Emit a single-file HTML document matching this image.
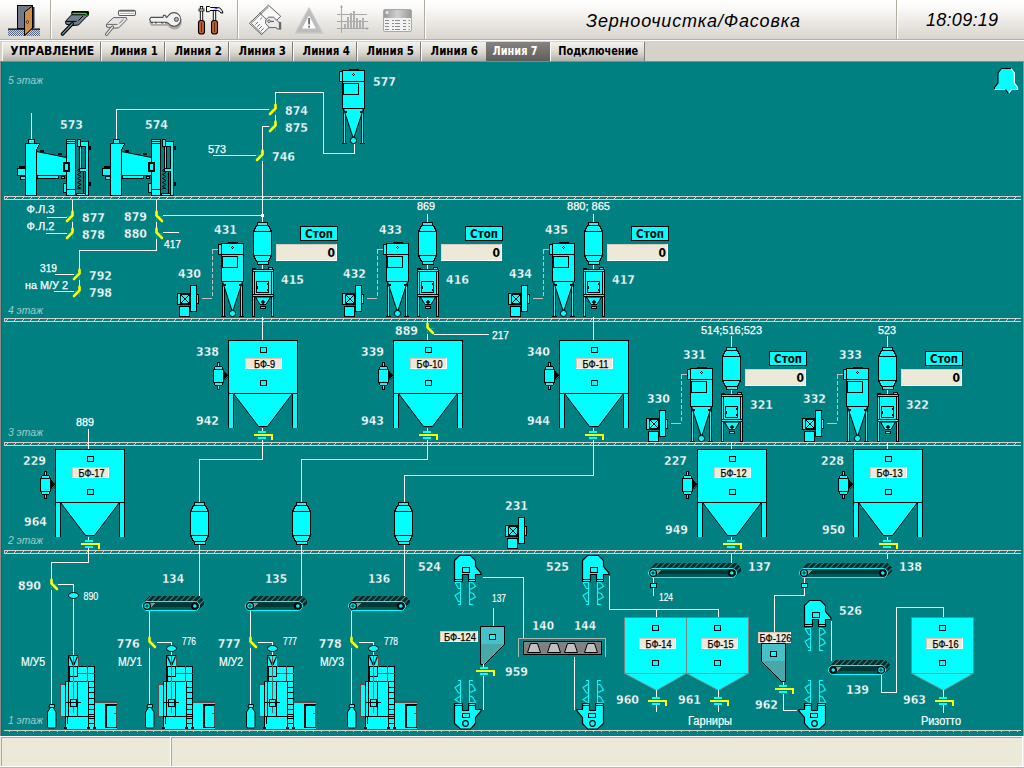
<!DOCTYPE html>
<html lang="ru"><head><meta charset="utf-8"><title>Зерноочистка/Фасовка</title>
<style>
html,body{margin:0;padding:0;background:#008080;overflow:hidden}
body{width:1024px;height:768px;position:relative;font-family:"Liberation Sans","DejaVu Sans",sans-serif}
svg{position:absolute;left:0;top:0;display:block}
text{font-family:"Liberation Sans","DejaVu Sans",sans-serif;fill:#fff;color:#fff;white-space:pre}
.b{font-family:"DejaVu Sans Condensed","DejaVu Sans","Liberation Sans",sans-serif;font-weight:bold;font-size:12px}
.bt{stroke:#008080;stroke-width:.3px}
.l{font-size:11px;stroke:currentColor;stroke-width:.25px}
.l2{font-size:12px;stroke:#fff;stroke-width:.2px}
.s{font-size:10px;stroke:#fff;stroke-width:.15px}
.fl{font-size:11.5px;font-style:italic;fill:#a3cac7}
.tb{font-family:"DejaVu Sans Condensed","DejaVu Sans","Liberation Sans",sans-serif;font-weight:bold;font-size:11.5px}
.ti{font-size:18px;font-style:italic;fill:#000}
</style></head>
<body>
<svg width="1024" height="768" viewBox="0 0 1024 768" shape-rendering="crispEdges">
<defs>
<linearGradient id="tbar" x1="0" y1="0" x2="0" y2="1"><stop offset="0" stop-color="#ffffff"/><stop offset=".25" stop-color="#f9f8f6"/><stop offset="1" stop-color="#d8d4cd"/></linearGradient>
<linearGradient id="tab" x1="0" y1="0" x2="0" y2="1"><stop offset="0" stop-color="#f3f2ec"/><stop offset=".5" stop-color="#dcd9d2"/><stop offset="1" stop-color="#afaba4"/></linearGradient>
<linearGradient id="tsel" x1="0" y1="0" x2="0" y2="1"><stop offset="0" stop-color="#858380"/><stop offset="1" stop-color="#5e5c57"/></linearGradient>
<linearGradient id="tbg" x1="0" y1="0" x2="1" y2="0"><stop offset="0" stop-color="#9a9a9a"/><stop offset=".5" stop-color="#d0d0d0"/><stop offset="1" stop-color="#9a9a9a"/></linearGradient>
<pattern id="fh" x="0" y="1" width="8" height="2" patternUnits="userSpaceOnUse"><rect x="7" y="0" width="1" height="1" fill="#d6cfcb"/><rect x="6" y="1" width="1" height="1" fill="#d6cfcb"/></pattern>
<pattern id="hatch" width="4" height="4" patternUnits="userSpaceOnUse" patternTransform="rotate(45)"><rect width="4" height="4" fill="#0a2a2a"/><rect width="1.3" height="4" fill="#2a8a8a"/></pattern>
<pattern id="dots" width="2" height="2" patternUnits="userSpaceOnUse"><rect width="1" height="1" fill="#e2dcd8"/><rect x="1" y="1" width="1" height="1" fill="#e2dcd8"/></pattern>
<pattern id="stip" width="2" height="2" patternUnits="userSpaceOnUse"><rect width="2" height="2" fill="#d0d0d0"/><rect width="1" height="1" fill="#5a6a8a"/><rect x="1" y="1" width="1" height="1" fill="#5a6a8a"/></pattern>
</defs>
<rect x="0" y="0" width="1024" height="768" fill="#008080"/>
<!-- toolbar -->
<rect x="0" y="0" width="1024" height="39" fill="url(#tbar)"/>
<rect x="0" y="39" width="1024" height="1" fill="#b4b0a6"/>
<rect x="0" y="40" width="1024" height="1" fill="#ffffff"/>
<rect x="0" y="41" width="1024" height="21" fill="#d6d2ca"/>
<g fill="#b0aca2"><rect x="50" y="0" width="1" height="39"/><rect x="237" y="0" width="1" height="39"/><rect x="424" y="0" width="1" height="39"/><rect x="896" y="0" width="1" height="39"/></g>
<g fill="#ffffff"><rect x="51" y="0" width="1" height="39"/><rect x="238" y="0" width="1" height="39"/><rect x="425" y="0" width="1" height="39"/><rect x="897" y="0" width="1" height="39"/></g>
<g shape-rendering="auto">
<rect x="8" y="29" width="32" height="7" fill="url(#stip)"/>
<rect x="8" y="28.5" width="32" height="1.2" fill="#000"/>
<rect x="17.5" y="5.5" width="15" height="23" fill="#707a8c" stroke="#000" stroke-width="1"/>
<polygon points="24.5,12 32.5,6 32.5,28 24.5,35.5" fill="#d08c48" stroke="#000" stroke-width="1"/>
<rect x="33" y="7" width="1.5" height="21" fill="#1c2c50"/>
<ellipse cx="27.5" cy="22" rx="1" ry="1.6" fill="#9cd" stroke="#000" stroke-width=".6"/>
<polygon points="72,11 88.5,11 89.2,13 88.7,15.5 87,16.8 85.5,14.6 71.2,14.6 71.2,12.5" fill="#000"/>
<polygon points="71.5,14.8 86.3,14.8 87,16.2 78.5,25 73,25.5 66,24.2 65.5,21.3" fill="#708090" stroke="#000" stroke-width="1" stroke-linejoin="round"/>
<path d="M72.5,13.3H85.5L87.4,15.6" fill="none" stroke="#00f000" stroke-width="1.3"/>
<path d="M66,21.4H76.6M78.4,20.6L83,16" stroke="#000" stroke-width="1" fill="none"/>
<path d="M72.3,23.8L62.5,34" stroke="#000" stroke-width="3.6" fill="none" stroke-linecap="round"/>
<path d="M72.3,23.8L62.5,34" stroke="#708090" stroke-width="1.4" fill="none" stroke-linecap="round"/>
<rect x="118.5" y="10.3" width="17" height="5.2" rx="1.6" fill="#fdfdfd" stroke="#5c5c5c" stroke-width="1.1"/>
<rect x="119.5" y="10.2" width="15" height="1.4" fill="#5c5c5c"/>
<path d="M120.5,13.4h13" stroke="#606060" stroke-width="1" stroke-dasharray="1,1"/>
<polygon points="113.5,17.6 126.4,17.6 126.8,19.6 118.8,27.8 114,28.2 106.6,27 106.4,24.2" fill="#e6e6e6" stroke="#606060" stroke-width="1" stroke-linejoin="round"/>
<path d="M107,24.4H117.5M119.3,23.3L123.5,19.3" stroke="#686868" stroke-width="1" fill="none"/>
<path d="M112.5,27L106.6,34.3" stroke="#606060" stroke-width="3.2" fill="none" stroke-linecap="round"/>
<path d="M112.5,27L106.6,34.3" stroke="#f2f2f2" stroke-width="1.2" fill="none" stroke-linecap="round"/>
<path d="M149.6,19.6L150.8,17.4H163L163.4,15.4H165.2L166.6,17.6L168.4,15.6A6.8,6.8 0 1 1 168.4,23.2L166.8,22.4H151.2Z" fill="#a9a9a9" stroke="#a9a9a9" stroke-width="1.2" transform="translate(0.3,2.8)"/>
<path d="M149.6,19.6L150.8,17.4H163L163.4,15.4H165.2L166.6,17.6L168.4,15.6A6.8,6.8 0 1 1 168.4,23.2L166.8,22.4H151.2Z" fill="#f1f1f1" stroke="#505050" stroke-width="1.1" stroke-linejoin="round"/>
<circle cx="176.4" cy="19.4" r="2" fill="#b4b4b4" stroke="#484848" stroke-width="1"/>
<path d="M153,23.4h2M157,23.4h4M163.5,23.4h1.5" stroke="#f1f1f1" stroke-width="1.2"/>
<rect x="200.3" y="6.5" width="2.4" height="14" fill="#f4f4f4" stroke="#000" stroke-width=".9"/>
<rect x="199" y="9" width="5" height="2" fill="#fff" stroke="#000" stroke-width=".8"/>
<rect x="198.5" y="20.5" width="6" height="13.5" rx="2.6" fill="#bf5f2f" stroke="#000" stroke-width="1.1"/>
<path d="M201.5,22.5v9.5" stroke="#5a2a10" stroke-width=".9"/>
<rect x="213.3" y="9" width="2.4" height="12" fill="#f4f4f4" stroke="#000" stroke-width=".9"/>
<path d="M206.5,6.5h3l1,1h7q4,0 5.5,5.5h-2.2q-1,-2.5 -3.3,-2.5h-7.5l-.8,1.2h-2.7z" fill="#f8f8f8" stroke="#000" stroke-width="1"/>
<path d="M213.5,9.3l3,-1.6h2.5l-3,1.6z" fill="#2030ff"/>
<rect x="211.5" y="20.5" width="6" height="13.5" rx="2.6" fill="#bf5f2f" stroke="#000" stroke-width="1.1"/>
<path d="M214.5,22.5v9.5" stroke="#5a2a10" stroke-width=".9"/>
<polygon points="268.4,5.2 280.8,16.3 261.5,34.6 249.4,23.3" fill="#f9f9f9" stroke="#5e5e5e" stroke-width="1"/>
<path d="M251.2,23.3L268.5,6.9M251.2,23.3L262.2,33.5" stroke="#707070" stroke-width=".9" fill="none"/>
<path d="M259.4,12.9L268.5,21.5L269.4,27.4" stroke="#5e5e5e" stroke-width="1" fill="none"/>
<path d="M255.4,24.6l2.6,-2.6M257.3,26.7l2.6,-2.6M259.2,28.8l2.6,-2.6M261.1,30.9l2.6,-2.6M260.2,19.4l1.8,-1.8" stroke="#6a6a6a" stroke-width="1" fill="none"/>
<polygon points="265.8,19.8 268.6,17.2 273.6,17.2 278.6,22 279.4,22 279.4,29 277.2,29 276.4,27.6 269.4,27.6 265.6,23.6" fill="#e9e9e9" stroke="#5e5e5e" stroke-width="1" stroke-linejoin="round"/>
<rect x="279.2" y="22" width="2" height="7.7" fill="#686868"/>
<circle cx="269" cy="21.2" r="1.3" fill="#fff" stroke="#505050" stroke-width=".9"/>
<path d="M270.4,21.4H274" stroke="#505050" stroke-width="1"/>
<polygon points="309,8 322.5,33 295.5,33" fill="#bcbcbc" stroke="#c8c8c8" stroke-width="1.4" stroke-linejoin="round"/>
<polygon points="309,15.5 316,28.5 302,28.5" fill="#ffffff"/>
<rect x="308.2" y="18" width="1.8" height="6.5" fill="#6a6a6a"/><rect x="308.2" y="25.8" width="1.8" height="1.8" fill="#6a6a6a"/>
<path d="M341.5,6v27M337,14.5h30M337,21.5h31M337,28.5h31" stroke="#a8a8a8" stroke-width="1" fill="none"/>
<path d="M341.5,5l-1.5,2.5h3zM369,28.5l-2.5,-1.5v3z" fill="#a0a0a0"/>
<rect x="344" y="24" width="2" height="4" fill="#b0b0b0"/>
<rect x="344" y="30" width="2" height="2.5" fill="#d8d8d8"/>
<rect x="347" y="17" width="2" height="11" fill="#b0b0b0"/>
<rect x="347" y="30" width="2" height="2.5" fill="#d8d8d8"/>
<rect x="350" y="13" width="2" height="15" fill="#b0b0b0"/>
<rect x="350" y="30" width="2" height="2.5" fill="#d8d8d8"/>
<rect x="353" y="11" width="2" height="17" fill="#b0b0b0"/>
<rect x="353" y="30" width="2" height="2.5" fill="#d8d8d8"/>
<rect x="356" y="18" width="2" height="10" fill="#b0b0b0"/>
<rect x="356" y="30" width="2" height="2.5" fill="#d8d8d8"/>
<rect x="359" y="20" width="2" height="8" fill="#b0b0b0"/>
<rect x="359" y="30" width="2" height="2.5" fill="#d8d8d8"/>
<rect x="362" y="18" width="2" height="10" fill="#b0b0b0"/>
<rect x="362" y="30" width="2" height="2.5" fill="#d8d8d8"/>
<rect x="383.5" y="9.5" width="28" height="22" rx="1.5" fill="#f2f2f2" stroke="#a8a8a8" stroke-width="1"/>
<rect x="384" y="10" width="27" height="8" fill="url(#tbg)"/>
<circle cx="387" cy="12.5" r="1.6" fill="#e8e8e8"/>
<path d="M385,20.5h4M392,20.5h2M395,20.5h5M403,20.5h3M408.5,20.5h1.5" stroke="#8a8a8a" stroke-width="1"/>
<path d="M385,23.5h4M392,23.5h2M395,23.5h5M403,23.5h3M408.5,23.5h1.5" stroke="#8a8a8a" stroke-width="1"/>
<path d="M385,26.5h4M392,26.5h2M395,26.5h5M403,26.5h3M408.5,26.5h1.5" stroke="#8a8a8a" stroke-width="1"/>
<path d="M385,29.5h4M392,29.5h2M395,29.5h5M403,29.5h3M408.5,29.5h1.5" stroke="#8a8a8a" stroke-width="1"/>
</g>
<text class="ti" x="693" y="26.5" text-anchor="middle" textLength="214" lengthAdjust="spacing" shape-rendering="auto">Зерноочистка/Фасовка</text>
<text class="ti" x="962" y="25.9" text-anchor="middle" textLength="72" lengthAdjust="spacing">18:09:19</text>
<!-- tabs -->
<rect x="2" y="42" width="98" height="20" fill="url(#tab)"/>
<rect x="100" y="42" width="1" height="20" fill="#7c7c7c"/>
<rect x="2" y="42" width="1" height="19" fill="#fbfaf6"/>
<text class="tb" x="10.3" y="55" textLength="84" lengthAdjust="spacingAndGlyphs" style="fill:#000">УПРАВЛЕНИЕ</text>
<rect x="101" y="42" width="63" height="20" fill="url(#tab)"/>
<rect x="164" y="42" width="1" height="20" fill="#7c7c7c"/>
<rect x="101" y="42" width="1" height="19" fill="#fbfaf6"/>
<text class="tb" x="110.4" y="55" textLength="47.4" lengthAdjust="spacingAndGlyphs" style="fill:#000">Линия 1</text>
<rect x="165" y="42" width="63" height="20" fill="url(#tab)"/>
<rect x="228" y="42" width="1" height="20" fill="#7c7c7c"/>
<rect x="165" y="42" width="1" height="19" fill="#fbfaf6"/>
<text class="tb" x="174.5" y="55" textLength="47.4" lengthAdjust="spacingAndGlyphs" style="fill:#000">Линия 2</text>
<rect x="229" y="42" width="63" height="20" fill="url(#tab)"/>
<rect x="292" y="42" width="1" height="20" fill="#7c7c7c"/>
<rect x="229" y="42" width="1" height="19" fill="#fbfaf6"/>
<text class="tb" x="238.6" y="55" textLength="47.4" lengthAdjust="spacingAndGlyphs" style="fill:#000">Линия 3</text>
<rect x="293" y="42" width="63" height="20" fill="url(#tab)"/>
<rect x="356" y="42" width="1" height="20" fill="#7c7c7c"/>
<rect x="293" y="42" width="1" height="19" fill="#fbfaf6"/>
<text class="tb" x="302.6" y="55" textLength="47.4" lengthAdjust="spacingAndGlyphs" style="fill:#000">Линия 4</text>
<rect x="357" y="42" width="63" height="20" fill="url(#tab)"/>
<rect x="420" y="42" width="1" height="20" fill="#7c7c7c"/>
<rect x="357" y="42" width="1" height="19" fill="#fbfaf6"/>
<text class="tb" x="366.6" y="55" textLength="47.4" lengthAdjust="spacingAndGlyphs" style="fill:#000">Линия 5</text>
<rect x="421" y="42" width="65" height="20" fill="url(#tab)"/>
<rect x="421" y="42" width="1" height="19" fill="#fbfaf6"/>
<text class="tb" x="430.6" y="55" textLength="47.4" lengthAdjust="spacingAndGlyphs" style="fill:#000">Линия 6</text>
<rect x="486" y="42" width="64" height="20" fill="url(#tsel)"/>
<text class="tb" x="492.6" y="55" textLength="45" lengthAdjust="spacingAndGlyphs" style="fill:#fff">Линия 7</text>
<rect x="550" y="42" width="94" height="20" fill="url(#tab)"/>
<rect x="644" y="42" width="1" height="20" fill="#7c7c7c"/>
<rect x="550" y="42" width="1" height="19" fill="#fbfaf6"/>
<text class="tb" x="558.2" y="55" textLength="80" lengthAdjust="spacingAndGlyphs" style="fill:#000">Подключение</text>
<!-- frame -->
<rect x="0" y="61" width="1024" height="1" fill="#8e8685"/>
<rect x="0" y="62" width="1" height="674" fill="#8e8a88"/>
<rect x="1" y="62" width="1" height="674" fill="#007070"/>
<rect x="1023" y="62" width="1" height="674" fill="#9a9896"/>
<rect x="1022" y="62" width="1" height="672" fill="#007878"/>
<!-- plant -->
<rect x="4" y="196" width="1017" height="1" fill="#d6cfcb"/>
<rect x="4" y="197" width="1017" height="2" fill="url(#fh)"/>
<rect x="4" y="199" width="1017" height="1" fill="#d6cfcb"/>
<rect x="4" y="196" width="1" height="4" fill="#d6cfcb"/>
<rect x="4" y="318" width="1017" height="1" fill="#d6cfcb"/>
<rect x="4" y="319" width="1017" height="2" fill="url(#fh)"/>
<rect x="4" y="321" width="1017" height="1" fill="#d6cfcb"/>
<rect x="4" y="318" width="1" height="4" fill="#d6cfcb"/>
<rect x="4" y="442" width="1017" height="1" fill="#d6cfcb"/>
<rect x="4" y="443" width="1017" height="2" fill="url(#fh)"/>
<rect x="4" y="445" width="1017" height="1" fill="#d6cfcb"/>
<rect x="4" y="442" width="1" height="4" fill="#d6cfcb"/>
<rect x="4" y="550" width="1017" height="1" fill="#d6cfcb"/>
<rect x="4" y="551" width="1017" height="2" fill="url(#fh)"/>
<rect x="4" y="553" width="1017" height="1" fill="#d6cfcb"/>
<rect x="4" y="550" width="1" height="4" fill="#d6cfcb"/>
<rect x="4" y="730" width="1017" height="1" fill="#d6cfcb"/>
<rect x="9" y="731" width="1" height="1" fill="#d6cfcb"/>
<rect x="17" y="731" width="1" height="1" fill="#d6cfcb"/>
<rect x="25" y="731" width="1" height="1" fill="#d6cfcb"/>
<rect x="33" y="731" width="1" height="1" fill="#d6cfcb"/>
<rect x="41" y="731" width="1" height="1" fill="#d6cfcb"/>
<rect x="49" y="731" width="1" height="1" fill="#d6cfcb"/>
<rect x="57" y="731" width="1" height="1" fill="#d6cfcb"/>
<rect x="65" y="731" width="1" height="1" fill="#d6cfcb"/>
<rect x="73" y="731" width="1" height="1" fill="#d6cfcb"/>
<rect x="81" y="731" width="1" height="1" fill="#d6cfcb"/>
<rect x="89" y="731" width="1" height="1" fill="#d6cfcb"/>
<rect x="97" y="731" width="1" height="1" fill="#d6cfcb"/>
<rect x="105" y="731" width="1" height="1" fill="#d6cfcb"/>
<rect x="113" y="731" width="1" height="1" fill="#d6cfcb"/>
<rect x="121" y="731" width="1" height="1" fill="#d6cfcb"/>
<rect x="129" y="731" width="1" height="1" fill="#d6cfcb"/>
<rect x="137" y="731" width="1" height="1" fill="#d6cfcb"/>
<rect x="145" y="731" width="1" height="1" fill="#d6cfcb"/>
<rect x="153" y="731" width="1" height="1" fill="#d6cfcb"/>
<rect x="161" y="731" width="1" height="1" fill="#d6cfcb"/>
<rect x="169" y="731" width="1" height="1" fill="#d6cfcb"/>
<rect x="177" y="731" width="1" height="1" fill="#d6cfcb"/>
<rect x="185" y="731" width="1" height="1" fill="#d6cfcb"/>
<rect x="193" y="731" width="1" height="1" fill="#d6cfcb"/>
<rect x="201" y="731" width="1" height="1" fill="#d6cfcb"/>
<rect x="209" y="731" width="1" height="1" fill="#d6cfcb"/>
<rect x="217" y="731" width="1" height="1" fill="#d6cfcb"/>
<rect x="225" y="731" width="1" height="1" fill="#d6cfcb"/>
<rect x="233" y="731" width="1" height="1" fill="#d6cfcb"/>
<rect x="241" y="731" width="1" height="1" fill="#d6cfcb"/>
<rect x="249" y="731" width="1" height="1" fill="#d6cfcb"/>
<rect x="257" y="731" width="1" height="1" fill="#d6cfcb"/>
<rect x="265" y="731" width="1" height="1" fill="#d6cfcb"/>
<rect x="273" y="731" width="1" height="1" fill="#d6cfcb"/>
<rect x="281" y="731" width="1" height="1" fill="#d6cfcb"/>
<rect x="289" y="731" width="1" height="1" fill="#d6cfcb"/>
<rect x="297" y="731" width="1" height="1" fill="#d6cfcb"/>
<rect x="305" y="731" width="1" height="1" fill="#d6cfcb"/>
<rect x="313" y="731" width="1" height="1" fill="#d6cfcb"/>
<rect x="321" y="731" width="1" height="1" fill="#d6cfcb"/>
<rect x="329" y="731" width="1" height="1" fill="#d6cfcb"/>
<rect x="337" y="731" width="1" height="1" fill="#d6cfcb"/>
<rect x="345" y="731" width="1" height="1" fill="#d6cfcb"/>
<rect x="353" y="731" width="1" height="1" fill="#d6cfcb"/>
<rect x="361" y="731" width="1" height="1" fill="#d6cfcb"/>
<rect x="369" y="731" width="1" height="1" fill="#d6cfcb"/>
<rect x="377" y="731" width="1" height="1" fill="#d6cfcb"/>
<rect x="385" y="731" width="1" height="1" fill="#d6cfcb"/>
<rect x="393" y="731" width="1" height="1" fill="#d6cfcb"/>
<rect x="401" y="731" width="1" height="1" fill="#d6cfcb"/>
<rect x="409" y="731" width="1" height="1" fill="#d6cfcb"/>
<rect x="417" y="731" width="1" height="1" fill="#d6cfcb"/>
<rect x="425" y="731" width="1" height="1" fill="#d6cfcb"/>
<rect x="433" y="731" width="1" height="1" fill="#d6cfcb"/>
<rect x="441" y="731" width="1" height="1" fill="#d6cfcb"/>
<rect x="449" y="731" width="1" height="1" fill="#d6cfcb"/>
<rect x="457" y="731" width="1" height="1" fill="#d6cfcb"/>
<rect x="465" y="731" width="1" height="1" fill="#d6cfcb"/>
<rect x="473" y="731" width="1" height="1" fill="#d6cfcb"/>
<rect x="481" y="731" width="1" height="1" fill="#d6cfcb"/>
<rect x="489" y="731" width="1" height="1" fill="#d6cfcb"/>
<rect x="497" y="731" width="1" height="1" fill="#d6cfcb"/>
<rect x="505" y="731" width="1" height="1" fill="#d6cfcb"/>
<rect x="513" y="731" width="1" height="1" fill="#d6cfcb"/>
<rect x="521" y="731" width="1" height="1" fill="#d6cfcb"/>
<rect x="529" y="731" width="1" height="1" fill="#d6cfcb"/>
<rect x="537" y="731" width="1" height="1" fill="#d6cfcb"/>
<rect x="545" y="731" width="1" height="1" fill="#d6cfcb"/>
<rect x="553" y="731" width="1" height="1" fill="#d6cfcb"/>
<rect x="561" y="731" width="1" height="1" fill="#d6cfcb"/>
<rect x="569" y="731" width="1" height="1" fill="#d6cfcb"/>
<rect x="577" y="731" width="1" height="1" fill="#d6cfcb"/>
<rect x="585" y="731" width="1" height="1" fill="#d6cfcb"/>
<rect x="593" y="731" width="1" height="1" fill="#d6cfcb"/>
<rect x="601" y="731" width="1" height="1" fill="#d6cfcb"/>
<rect x="609" y="731" width="1" height="1" fill="#d6cfcb"/>
<rect x="617" y="731" width="1" height="1" fill="#d6cfcb"/>
<rect x="625" y="731" width="1" height="1" fill="#d6cfcb"/>
<rect x="633" y="731" width="1" height="1" fill="#d6cfcb"/>
<rect x="641" y="731" width="1" height="1" fill="#d6cfcb"/>
<rect x="649" y="731" width="1" height="1" fill="#d6cfcb"/>
<rect x="657" y="731" width="1" height="1" fill="#d6cfcb"/>
<rect x="665" y="731" width="1" height="1" fill="#d6cfcb"/>
<rect x="673" y="731" width="1" height="1" fill="#d6cfcb"/>
<rect x="681" y="731" width="1" height="1" fill="#d6cfcb"/>
<rect x="689" y="731" width="1" height="1" fill="#d6cfcb"/>
<rect x="697" y="731" width="1" height="1" fill="#d6cfcb"/>
<rect x="705" y="731" width="1" height="1" fill="#d6cfcb"/>
<rect x="713" y="731" width="1" height="1" fill="#d6cfcb"/>
<rect x="721" y="731" width="1" height="1" fill="#d6cfcb"/>
<rect x="729" y="731" width="1" height="1" fill="#d6cfcb"/>
<rect x="737" y="731" width="1" height="1" fill="#d6cfcb"/>
<rect x="745" y="731" width="1" height="1" fill="#d6cfcb"/>
<rect x="753" y="731" width="1" height="1" fill="#d6cfcb"/>
<rect x="761" y="731" width="1" height="1" fill="#d6cfcb"/>
<rect x="769" y="731" width="1" height="1" fill="#d6cfcb"/>
<rect x="777" y="731" width="1" height="1" fill="#d6cfcb"/>
<rect x="785" y="731" width="1" height="1" fill="#d6cfcb"/>
<rect x="793" y="731" width="1" height="1" fill="#d6cfcb"/>
<rect x="801" y="731" width="1" height="1" fill="#d6cfcb"/>
<rect x="809" y="731" width="1" height="1" fill="#d6cfcb"/>
<rect x="817" y="731" width="1" height="1" fill="#d6cfcb"/>
<rect x="825" y="731" width="1" height="1" fill="#d6cfcb"/>
<rect x="833" y="731" width="1" height="1" fill="#d6cfcb"/>
<rect x="841" y="731" width="1" height="1" fill="#d6cfcb"/>
<rect x="849" y="731" width="1" height="1" fill="#d6cfcb"/>
<rect x="857" y="731" width="1" height="1" fill="#d6cfcb"/>
<rect x="865" y="731" width="1" height="1" fill="#d6cfcb"/>
<rect x="873" y="731" width="1" height="1" fill="#d6cfcb"/>
<rect x="881" y="731" width="1" height="1" fill="#d6cfcb"/>
<rect x="889" y="731" width="1" height="1" fill="#d6cfcb"/>
<rect x="897" y="731" width="1" height="1" fill="#d6cfcb"/>
<rect x="905" y="731" width="1" height="1" fill="#d6cfcb"/>
<rect x="913" y="731" width="1" height="1" fill="#d6cfcb"/>
<rect x="921" y="731" width="1" height="1" fill="#d6cfcb"/>
<rect x="929" y="731" width="1" height="1" fill="#d6cfcb"/>
<rect x="937" y="731" width="1" height="1" fill="#d6cfcb"/>
<rect x="945" y="731" width="1" height="1" fill="#d6cfcb"/>
<rect x="953" y="731" width="1" height="1" fill="#d6cfcb"/>
<rect x="961" y="731" width="1" height="1" fill="#d6cfcb"/>
<rect x="969" y="731" width="1" height="1" fill="#d6cfcb"/>
<rect x="977" y="731" width="1" height="1" fill="#d6cfcb"/>
<rect x="985" y="731" width="1" height="1" fill="#d6cfcb"/>
<rect x="993" y="731" width="1" height="1" fill="#d6cfcb"/>
<rect x="1001" y="731" width="1" height="1" fill="#d6cfcb"/>
<rect x="1009" y="731" width="1" height="1" fill="#d6cfcb"/>
<rect x="1017" y="731" width="1" height="1" fill="#d6cfcb"/>
<text class="fl" x="8" y="84" textLength="35" lengthAdjust="spacingAndGlyphs">5 этаж</text>
<text class="fl" x="8" y="314" textLength="35" lengthAdjust="spacingAndGlyphs">4 этаж</text>
<text class="fl" x="8" y="436" textLength="35" lengthAdjust="spacingAndGlyphs">3 этаж</text>
<text class="fl" x="8" y="544" textLength="35" lengthAdjust="spacingAndGlyphs">2 этаж</text>
<text class="fl" x="8" y="724" textLength="35" lengthAdjust="spacingAndGlyphs">1 этаж</text>
<rect x="76.5" y="193.5" width="12" height="2" fill="#00ffff" stroke="#000000" stroke-width="1"/>
<rect x="85.5" y="141.5" width="3" height="54" fill="#00ffff" stroke="#000000" stroke-width="1"/>
<rect x="80.5" y="141.5" width="8" height="5" fill="#00ffff" stroke="#000000" stroke-width="1"/>
<rect x="86" y="146" width="2" height="2" fill="#00ffff"/>
<rect x="77.5" y="139.5" width="3" height="7" fill="#00ffff" stroke="#000000" stroke-width="1"/>
<rect x="79.5" y="146.5" width="2" height="22" fill="#00ffff" stroke="#000000" stroke-width="1"/>
<rect x="79.5" y="168.5" width="6" height="3" fill="#00ffff" stroke="#000000" stroke-width="1"/>
<rect x="85" y="169" width="1" height="2" fill="#00ffff"/>
<rect x="83" y="172" width="1" height="22" fill="#000000"/>
<polyline points="79,169 77.5,170.5 81,172.5 77.5,174.5 81,176.5 77.5,178.5 81,180.5 77.5,182.5 81,184.5 77.5,186.5 81,188.5 77.5,188.5" fill="none" stroke="#000000" stroke-width="1" shape-rendering="auto"/>
<rect x="89" y="146" width="2" height="4" fill="#000000"/>
<rect x="89" y="182" width="2" height="4" fill="#000000"/>
<polygon points="36.5,151.5 66.5,157.5 66.5,175.5 36.5,175.5" fill="#00ffff" stroke="#000000" stroke-width="1" shape-rendering="auto"/>
<rect x="40" y="150" width="4" height="2" fill="#000000"/>
<rect x="58" y="153" width="4" height="2" fill="#000000"/>
<rect x="37.5" y="175.5" width="21" height="3" fill="#00ffff" stroke="#000000" stroke-width="1"/>
<rect x="61.5" y="176.5" width="3" height="2" fill="#00ffff" stroke="#000000" stroke-width="1"/>
<rect x="19" y="166" width="6" height="3" fill="#000000"/>
<rect x="17.5" y="168.5" width="8" height="7" fill="#00ffff" stroke="#000000" stroke-width="1"/>
<rect x="20.5" y="176.5" width="5" height="3" fill="#00ffff" stroke="#000000" stroke-width="1"/>
<rect x="28.5" y="139.5" width="6" height="4" fill="#00ffff" stroke="#000000" stroke-width="1"/>
<polygon points="25.5,143.5 39.5,143.5 36.5,150.5 36.5,195.5 25.5,195.5" fill="#00ffff" stroke="#000000" stroke-width="1" />
<rect x="66.5" y="139.5" width="9" height="56" fill="#00ffff" stroke="#000000" stroke-width="1"/>
<rect x="67" y="141" width="8" height="1" fill="#000000"/>
<rect x="67" y="143" width="8" height="1" fill="#000000"/>
<rect x="66" y="189" width="10" height="1" fill="#000000"/>
<rect x="63.8" y="162.8" width="5.4" height="8.4" fill="#00ffff" stroke="#000000" stroke-width="1.6"/>
<rect x="63.6" y="183.6" width="2.8" height="8.8" fill="#00ffff" stroke="#000000" stroke-width="1.2"/>
<rect x="161.5" y="193.5" width="12" height="2" fill="#00ffff" stroke="#000000" stroke-width="1"/>
<rect x="170.5" y="141.5" width="3" height="54" fill="#00ffff" stroke="#000000" stroke-width="1"/>
<rect x="165.5" y="141.5" width="8" height="5" fill="#00ffff" stroke="#000000" stroke-width="1"/>
<rect x="171" y="146" width="2" height="2" fill="#00ffff"/>
<rect x="162.5" y="139.5" width="3" height="7" fill="#00ffff" stroke="#000000" stroke-width="1"/>
<rect x="164.5" y="146.5" width="2" height="22" fill="#00ffff" stroke="#000000" stroke-width="1"/>
<rect x="164.5" y="168.5" width="6" height="3" fill="#00ffff" stroke="#000000" stroke-width="1"/>
<rect x="170" y="169" width="1" height="2" fill="#00ffff"/>
<rect x="168" y="172" width="1" height="22" fill="#000000"/>
<polyline points="164,169 162.5,170.5 166,172.5 162.5,174.5 166,176.5 162.5,178.5 166,180.5 162.5,182.5 166,184.5 162.5,186.5 166,188.5 162.5,188.5" fill="none" stroke="#000000" stroke-width="1" shape-rendering="auto"/>
<rect x="174" y="146" width="2" height="4" fill="#000000"/>
<rect x="174" y="182" width="2" height="4" fill="#000000"/>
<polygon points="121.5,151.5 151.5,157.5 151.5,175.5 121.5,175.5" fill="#00ffff" stroke="#000000" stroke-width="1" shape-rendering="auto"/>
<rect x="125" y="150" width="4" height="2" fill="#000000"/>
<rect x="143" y="153" width="4" height="2" fill="#000000"/>
<rect x="122.5" y="175.5" width="21" height="3" fill="#00ffff" stroke="#000000" stroke-width="1"/>
<rect x="146.5" y="176.5" width="3" height="2" fill="#00ffff" stroke="#000000" stroke-width="1"/>
<rect x="104" y="166" width="6" height="3" fill="#000000"/>
<rect x="102.5" y="168.5" width="8" height="7" fill="#00ffff" stroke="#000000" stroke-width="1"/>
<rect x="105.5" y="176.5" width="5" height="3" fill="#00ffff" stroke="#000000" stroke-width="1"/>
<rect x="113.5" y="139.5" width="6" height="4" fill="#00ffff" stroke="#000000" stroke-width="1"/>
<polygon points="110.5,143.5 124.5,143.5 121.5,150.5 121.5,195.5 110.5,195.5" fill="#00ffff" stroke="#000000" stroke-width="1" />
<rect x="151.5" y="139.5" width="9" height="56" fill="#00ffff" stroke="#000000" stroke-width="1"/>
<rect x="152" y="141" width="8" height="1" fill="#000000"/>
<rect x="152" y="143" width="8" height="1" fill="#000000"/>
<rect x="151" y="189" width="10" height="1" fill="#000000"/>
<rect x="148.8" y="162.8" width="5.4" height="8.4" fill="#00ffff" stroke="#000000" stroke-width="1.6"/>
<rect x="148.6" y="183.6" width="2.8" height="8.8" fill="#00ffff" stroke="#000000" stroke-width="1.2"/>
<rect x="31" y="113" width="1" height="26" fill="#ffffff"/>
<rect x="116" y="109" width="1" height="30" fill="#ffffff"/>
<rect x="116" y="109" width="153" height="1" fill="#ffffff"/>
<rect x="275" y="92" width="1" height="12" fill="#ffffff"/>
<rect x="275" y="92" width="49" height="1" fill="#ffffff"/>
<rect x="323" y="92" width="1" height="62" fill="#ffffff"/>
<rect x="323" y="153" width="32" height="1" fill="#ffffff"/>
<rect x="354" y="144" width="1" height="10" fill="#ffffff"/>
<rect x="275" y="115" width="1" height="6" fill="#ffffff"/>
<rect x="262" y="126" width="8" height="1" fill="#ffffff"/>
<rect x="262" y="126" width="1" height="24" fill="#ffffff"/>
<rect x="213" y="155" width="43" height="1" fill="#ffffff"/>
<rect x="275" y="109" width="1" height="6" fill="#00a0a0"/>
<rect x="269" y="109" width="6" height="1" fill="#00a0a0"/>
<path d="M275.5,104.8V108.5L270,114" stroke="#ffff00" stroke-width="2.6" fill="none" stroke-linecap="round" shape-rendering="auto"/>
<rect x="275" y="126" width="1" height="6" fill="#00a0a0"/>
<rect x="269" y="126" width="6" height="1" fill="#00a0a0"/>
<path d="M275.5,121.8V125.5L270,131" stroke="#ffff00" stroke-width="2.6" fill="none" stroke-linecap="round" shape-rendering="auto"/>
<rect x="262" y="155" width="1" height="6" fill="#00a0a0"/>
<rect x="256" y="155" width="6" height="1" fill="#00a0a0"/>
<path d="M262.5,150.8V154.5L257,160" stroke="#ffff00" stroke-width="2.6" fill="none" stroke-linecap="round" shape-rendering="auto"/>
<text class="b bt" x="60" y="129" textLength="23" lengthAdjust="spacingAndGlyphs">573</text>
<text class="b bt" x="145" y="129" textLength="23" lengthAdjust="spacingAndGlyphs">574</text>
<text class="b bt" x="285" y="115" textLength="23" lengthAdjust="spacingAndGlyphs">874</text>
<text class="b bt" x="285" y="132" textLength="23" lengthAdjust="spacingAndGlyphs">875</text>
<text class="b bt" x="272" y="161" textLength="23" lengthAdjust="spacingAndGlyphs">746</text>
<text class="l" x="208" y="153" textLength="18" lengthAdjust="spacingAndGlyphs">573</text>
<rect x="349.5" y="69.5" width="9" height="1" fill="#00ffff" stroke="#000000" stroke-width="1"/>
<rect x="339.5" y="71.5" width="3" height="10" fill="#00ffff" stroke="#000000" stroke-width="1"/>
<rect x="342.5" y="70.5" width="22" height="38" fill="#00ffff" stroke="#000000" stroke-width="1"/>
<rect x="342" y="81" width="23" height="1" fill="#000000"/>
<rect x="353" y="73" width="1" height="1" fill="#000000"/>
<rect x="352" y="74" width="1" height="1" fill="#000000"/>
<rect x="354" y="74" width="1" height="1" fill="#000000"/>
<rect x="353" y="75" width="1" height="1" fill="#000000"/>
<rect x="343.5" y="83.5" width="15" height="11" fill="#00ffff" stroke="#000000" stroke-width="1"/>
<rect x="343.5" y="108.5" width="2" height="35" fill="#00ffff" stroke="#000000" stroke-width="1"/>
<rect x="361.5" y="108.5" width="2" height="35" fill="#00ffff" stroke="#000000" stroke-width="1"/>
<rect x="342" y="143" width="5" height="1" fill="#000000"/>
<rect x="360" y="143" width="5" height="1" fill="#000000"/>
<polygon points="343.5,108.5 363.5,108.5 354.2,137 352.8,137" fill="#00ffff" stroke="#000000" stroke-width="1" shape-rendering="auto"/>
<rect x="345" y="111" width="2" height="2" fill="#000000"/>
<rect x="360" y="111" width="2" height="2" fill="#000000"/>
<circle cx="353.5" cy="140.5" r="3.1" fill="#00ffff" stroke="#000" stroke-width="1" shape-rendering="auto"/>
<text class="b bt" x="373" y="86" textLength="23" lengthAdjust="spacingAndGlyphs">577</text>
<rect x="72" y="200" width="1" height="11" fill="#ffffff"/>
<rect x="156" y="200" width="1" height="11" fill="#ffffff"/>
<rect x="262" y="161" width="1" height="61" fill="#ffffff"/>
<rect x="72" y="216" width="1" height="6" fill="#00a0a0"/>
<rect x="66" y="216" width="6" height="1" fill="#00a0a0"/>
<path d="M72.5,211.8V215.5L67,221" stroke="#ffff00" stroke-width="2.6" fill="none" stroke-linecap="round" shape-rendering="auto"/>
<rect x="72" y="233" width="1" height="6" fill="#00a0a0"/>
<rect x="66" y="233" width="6" height="1" fill="#00a0a0"/>
<path d="M72.5,228.8V232.5L67,238" stroke="#ffff00" stroke-width="2.6" fill="none" stroke-linecap="round" shape-rendering="auto"/>
<rect x="72" y="222" width="1" height="6" fill="#ffffff"/>
<rect x="47" y="217" width="20" height="1" fill="#ffffff"/>
<rect x="46" y="233" width="21" height="1" fill="#ffffff"/>
<text class="l" x="26.4" y="213" textLength="28" lengthAdjust="spacingAndGlyphs">Ф.Л.3</text>
<text class="l" x="26.4" y="230" textLength="28" lengthAdjust="spacingAndGlyphs">Ф.Л.2</text>
<text class="b bt" x="82" y="222" textLength="23" lengthAdjust="spacingAndGlyphs">877</text>
<text class="b bt" x="82" y="239" textLength="23" lengthAdjust="spacingAndGlyphs">878</text>
<text class="b bt" x="124" y="221" textLength="23" lengthAdjust="spacingAndGlyphs">879</text>
<text class="b bt" x="124" y="238" textLength="23" lengthAdjust="spacingAndGlyphs">880</text>
<rect x="156" y="216" width="1" height="6" fill="#00a0a0"/>
<rect x="157" y="216" width="6" height="1" fill="#00a0a0"/>
<path d="M156.5,211.8V215.5L162,221" stroke="#ffff00" stroke-width="2.6" fill="none" stroke-linecap="round" shape-rendering="auto"/>
<rect x="156" y="233" width="1" height="6" fill="#00a0a0"/>
<rect x="157" y="233" width="6" height="1" fill="#00a0a0"/>
<path d="M156.5,228.8V232.5L162,238" stroke="#ffff00" stroke-width="2.6" fill="none" stroke-linecap="round" shape-rendering="auto"/>
<rect x="156" y="222" width="1" height="6" fill="#ffffff"/>
<rect x="163" y="215" width="100" height="1" fill="#ffffff"/>
<rect x="163" y="232" width="16" height="1" fill="#ffffff"/>
<circle cx="262.5" cy="215.5" r="1.5" fill="#fff"/>
<text class="l" x="164" y="248" textLength="17" lengthAdjust="spacingAndGlyphs">417</text>
<rect x="156" y="239" width="1" height="12" fill="#ffffff"/>
<rect x="79" y="250" width="78" height="1" fill="#ffffff"/>
<rect x="79" y="250" width="1" height="19" fill="#ffffff"/>
<rect x="79" y="274" width="1" height="6" fill="#00a0a0"/>
<rect x="73" y="274" width="6" height="1" fill="#00a0a0"/>
<path d="M79.5,269.8V273.5L74,279" stroke="#ffff00" stroke-width="2.6" fill="none" stroke-linecap="round" shape-rendering="auto"/>
<rect x="79" y="291" width="1" height="6" fill="#00a0a0"/>
<rect x="73" y="291" width="6" height="1" fill="#00a0a0"/>
<path d="M79.5,286.8V290.5L74,296" stroke="#ffff00" stroke-width="2.6" fill="none" stroke-linecap="round" shape-rendering="auto"/>
<rect x="79" y="280" width="1" height="6" fill="#ffffff"/>
<rect x="55" y="274" width="19" height="1" fill="#ffffff"/>
<rect x="54" y="291" width="20" height="1" fill="#ffffff"/>
<text class="l" x="40" y="272" textLength="17" lengthAdjust="spacingAndGlyphs">319</text>
<text class="l" x="25" y="289" textLength="43" lengthAdjust="spacingAndGlyphs">на М/У 2</text>
<text class="b bt" x="89" y="280" textLength="23" lengthAdjust="spacingAndGlyphs">792</text>
<text class="b bt" x="89" y="297" textLength="23" lengthAdjust="spacingAndGlyphs">798</text>
<rect x="190.5" y="285.5" width="6" height="26" fill="#00ffff" stroke="#000000" stroke-width="1"/>
<rect x="196.5" y="294.5" width="2" height="9" fill="#00ffff" stroke="#000000" stroke-width="1"/>
<rect x="177.5" y="293.5" width="13" height="11" fill="#00ffff" stroke="#000000" stroke-width="1"/>
<rect x="180.5" y="294.5" width="9" height="9" fill="#00ffff" stroke="#000000" stroke-width="1"/>
<path d="M180.5,294.5L189.5,303.5M189.5,294.5L180.5,303.5" stroke="#000" stroke-width="1" fill="none"/>
<rect x="179.5" y="306.5" width="10" height="10" fill="#00ffff" stroke="#000000" stroke-width="1"/>
<rect x="202" y="298" width="10" height="1" fill="#c0c0c0"/>
<rect x="212" y="250" width="1" height="4" fill="#c0c0c0"/>
<rect x="212" y="256" width="1" height="4" fill="#c0c0c0"/>
<rect x="212" y="262" width="1" height="4" fill="#c0c0c0"/>
<rect x="212" y="268" width="1" height="4" fill="#c0c0c0"/>
<rect x="212" y="274" width="1" height="4" fill="#c0c0c0"/>
<rect x="212" y="280" width="1" height="4" fill="#c0c0c0"/>
<rect x="212" y="286" width="1" height="4" fill="#c0c0c0"/>
<rect x="212" y="292" width="1" height="4" fill="#c0c0c0"/>
<rect x="212" y="249" width="7" height="1" fill="#c0c0c0"/>
<rect x="228.5" y="242.5" width="9" height="1" fill="#00ffff" stroke="#000000" stroke-width="1"/>
<rect x="218.5" y="244.5" width="3" height="10" fill="#00ffff" stroke="#000000" stroke-width="1"/>
<rect x="221.5" y="243.5" width="22" height="38" fill="#00ffff" stroke="#000000" stroke-width="1"/>
<rect x="221" y="254" width="23" height="1" fill="#000000"/>
<rect x="232" y="246" width="1" height="1" fill="#000000"/>
<rect x="231" y="247" width="1" height="1" fill="#000000"/>
<rect x="233" y="247" width="1" height="1" fill="#000000"/>
<rect x="232" y="248" width="1" height="1" fill="#000000"/>
<rect x="222.5" y="256.5" width="15" height="11" fill="#00ffff" stroke="#000000" stroke-width="1"/>
<rect x="222.5" y="281.5" width="2" height="35" fill="#00ffff" stroke="#000000" stroke-width="1"/>
<rect x="240.5" y="281.5" width="2" height="35" fill="#00ffff" stroke="#000000" stroke-width="1"/>
<rect x="221" y="316" width="5" height="1" fill="#000000"/>
<rect x="239" y="316" width="5" height="1" fill="#000000"/>
<polygon points="222.5,281.5 242.5,281.5 233.2,310 231.8,310" fill="#00ffff" stroke="#000000" stroke-width="1" shape-rendering="auto"/>
<rect x="224" y="284" width="2" height="2" fill="#000000"/>
<rect x="239" y="284" width="2" height="2" fill="#000000"/>
<circle cx="232.5" cy="313.5" r="3.1" fill="#00ffff" stroke="#000" stroke-width="1" shape-rendering="auto"/>
<rect x="262" y="264" width="1" height="5" fill="#ffffff"/>
<rect x="257.5" y="222.5" width="10" height="3" fill="#00ffff" stroke="#000000" stroke-width="1"/>
<polygon points="256.5,225.5 268.5,225.5 271.5,231.5 271.5,255.5 268.5,261.5 256.5,261.5 253.5,255.5 253.5,231.5" fill="#00ffff" stroke="#000000" stroke-width="1" />
<rect x="254" y="231" width="18" height="1" fill="#000000"/>
<rect x="254" y="255" width="18" height="1" fill="#000000"/>
<rect x="257.5" y="261.5" width="11" height="3" fill="#00ffff" stroke="#000000" stroke-width="1"/>
<rect x="252" y="268" width="4" height="2" fill="#000000"/>
<rect x="268.5" y="267.5" width="4" height="2" fill="#00ffff" stroke="#000000" stroke-width="1"/>
<rect x="252.5" y="269.5" width="21" height="2" fill="#00ffff" stroke="#000000" stroke-width="1"/>
<rect x="252.5" y="271.5" width="2" height="45" fill="#00ffff" stroke="#000000" stroke-width="1"/>
<rect x="271.5" y="271.5" width="2" height="45" fill="#00ffff" stroke="#000000" stroke-width="1"/>
<rect x="254.5" y="271.5" width="17" height="23" fill="#00ffff" stroke="#000000" stroke-width="1"/>
<rect x="252.5" y="294.5" width="21" height="2" fill="#00ffff" stroke="#000000" stroke-width="1"/>
<rect x="256.7" y="281.7" width="11.6" height="10.6" fill="#00ffff" stroke="#000000" stroke-width="1.4"/>
<rect x="257" y="286" width="1" height="3" fill="#000000"/>
<rect x="267" y="283" width="1" height="2" fill="#000000"/>
<rect x="267" y="289" width="1" height="2" fill="#000000"/>
<polygon points="255.5,297 270.5,297 266,304.5 260,304.5" fill="#00ffff" stroke="#000000" stroke-width="1" shape-rendering="auto"/>
<polygon points="263,300 265,302 263,304 261,302" fill="#000000" stroke="#000000" stroke-width="0.5" shape-rendering="auto"/>
<rect x="260.5" y="306.5" width="5" height="2" fill="#00ffff" stroke="#000000" stroke-width="1"/>
<text class="b bt" x="214" y="234" textLength="23" lengthAdjust="spacingAndGlyphs">431</text>
<text class="b bt" x="178" y="278" textLength="23" lengthAdjust="spacingAndGlyphs">430</text>
<text class="b bt" x="281" y="284" textLength="23" lengthAdjust="spacingAndGlyphs">415</text>
<rect x="300.5" y="226.5" width="37" height="14" fill="#00ffff" stroke="#000000" stroke-width="1"/>
<text class="b" x="319" y="238" textLength="28" lengthAdjust="spacingAndGlyphs" text-anchor="middle" style="fill:#000;color:#000">Стоп</text>
<rect x="276" y="244" width="61" height="17" fill="#ece9d8"/>
<rect x="276" y="244" width="61" height="1" fill="#d9c9bb"/>
<rect x="276" y="244" width="1" height="17" fill="#e0d6c8"/>
<rect x="276" y="260" width="61" height="1" fill="#ffffff"/>
<rect x="336" y="244" width="1" height="17" fill="#ffffff"/>
<text class="b" x="335" y="257" text-anchor="end" style="fill:#000;color:#000">0</text>
<rect x="355.5" y="285.5" width="6" height="26" fill="#00ffff" stroke="#000000" stroke-width="1"/>
<rect x="361.5" y="294.5" width="2" height="9" fill="#00ffff" stroke="#000000" stroke-width="1"/>
<rect x="342.5" y="293.5" width="13" height="11" fill="#00ffff" stroke="#000000" stroke-width="1"/>
<rect x="345.5" y="294.5" width="9" height="9" fill="#00ffff" stroke="#000000" stroke-width="1"/>
<path d="M345.5,294.5L354.5,303.5M354.5,294.5L345.5,303.5" stroke="#000" stroke-width="1" fill="none"/>
<rect x="344.5" y="306.5" width="10" height="10" fill="#00ffff" stroke="#000000" stroke-width="1"/>
<rect x="367" y="298" width="10" height="1" fill="#c0c0c0"/>
<rect x="377" y="250" width="1" height="4" fill="#c0c0c0"/>
<rect x="377" y="256" width="1" height="4" fill="#c0c0c0"/>
<rect x="377" y="262" width="1" height="4" fill="#c0c0c0"/>
<rect x="377" y="268" width="1" height="4" fill="#c0c0c0"/>
<rect x="377" y="274" width="1" height="4" fill="#c0c0c0"/>
<rect x="377" y="280" width="1" height="4" fill="#c0c0c0"/>
<rect x="377" y="286" width="1" height="4" fill="#c0c0c0"/>
<rect x="377" y="292" width="1" height="4" fill="#c0c0c0"/>
<rect x="377" y="249" width="7" height="1" fill="#c0c0c0"/>
<rect x="393.5" y="242.5" width="9" height="1" fill="#00ffff" stroke="#000000" stroke-width="1"/>
<rect x="383.5" y="244.5" width="3" height="10" fill="#00ffff" stroke="#000000" stroke-width="1"/>
<rect x="386.5" y="243.5" width="22" height="38" fill="#00ffff" stroke="#000000" stroke-width="1"/>
<rect x="386" y="254" width="23" height="1" fill="#000000"/>
<rect x="397" y="246" width="1" height="1" fill="#000000"/>
<rect x="396" y="247" width="1" height="1" fill="#000000"/>
<rect x="398" y="247" width="1" height="1" fill="#000000"/>
<rect x="397" y="248" width="1" height="1" fill="#000000"/>
<rect x="387.5" y="256.5" width="15" height="11" fill="#00ffff" stroke="#000000" stroke-width="1"/>
<rect x="387.5" y="281.5" width="2" height="35" fill="#00ffff" stroke="#000000" stroke-width="1"/>
<rect x="405.5" y="281.5" width="2" height="35" fill="#00ffff" stroke="#000000" stroke-width="1"/>
<rect x="386" y="316" width="5" height="1" fill="#000000"/>
<rect x="404" y="316" width="5" height="1" fill="#000000"/>
<polygon points="387.5,281.5 407.5,281.5 398.2,310 396.8,310" fill="#00ffff" stroke="#000000" stroke-width="1" shape-rendering="auto"/>
<rect x="389" y="284" width="2" height="2" fill="#000000"/>
<rect x="404" y="284" width="2" height="2" fill="#000000"/>
<circle cx="397.5" cy="313.5" r="3.1" fill="#00ffff" stroke="#000" stroke-width="1" shape-rendering="auto"/>
<rect x="427" y="264" width="1" height="5" fill="#ffffff"/>
<rect x="422.5" y="222.5" width="10" height="3" fill="#00ffff" stroke="#000000" stroke-width="1"/>
<polygon points="421.5,225.5 433.5,225.5 436.5,231.5 436.5,255.5 433.5,261.5 421.5,261.5 418.5,255.5 418.5,231.5" fill="#00ffff" stroke="#000000" stroke-width="1" />
<rect x="419" y="231" width="18" height="1" fill="#000000"/>
<rect x="419" y="255" width="18" height="1" fill="#000000"/>
<rect x="422.5" y="261.5" width="11" height="3" fill="#00ffff" stroke="#000000" stroke-width="1"/>
<rect x="417" y="268" width="4" height="2" fill="#000000"/>
<rect x="433.5" y="267.5" width="4" height="2" fill="#00ffff" stroke="#000000" stroke-width="1"/>
<rect x="417.5" y="269.5" width="21" height="2" fill="#00ffff" stroke="#000000" stroke-width="1"/>
<rect x="417.5" y="271.5" width="2" height="45" fill="#00ffff" stroke="#000000" stroke-width="1"/>
<rect x="436.5" y="271.5" width="2" height="45" fill="#00ffff" stroke="#000000" stroke-width="1"/>
<rect x="419.5" y="271.5" width="17" height="23" fill="#00ffff" stroke="#000000" stroke-width="1"/>
<rect x="417.5" y="294.5" width="21" height="2" fill="#00ffff" stroke="#000000" stroke-width="1"/>
<rect x="421.7" y="281.7" width="11.6" height="10.6" fill="#00ffff" stroke="#000000" stroke-width="1.4"/>
<rect x="422" y="286" width="1" height="3" fill="#000000"/>
<rect x="432" y="283" width="1" height="2" fill="#000000"/>
<rect x="432" y="289" width="1" height="2" fill="#000000"/>
<polygon points="420.5,297 435.5,297 431,304.5 425,304.5" fill="#00ffff" stroke="#000000" stroke-width="1" shape-rendering="auto"/>
<polygon points="428,300 430,302 428,304 426,302" fill="#000000" stroke="#000000" stroke-width="0.5" shape-rendering="auto"/>
<rect x="425.5" y="306.5" width="5" height="2" fill="#00ffff" stroke="#000000" stroke-width="1"/>
<text class="b bt" x="379" y="234" textLength="23" lengthAdjust="spacingAndGlyphs">433</text>
<text class="b bt" x="343" y="278" textLength="23" lengthAdjust="spacingAndGlyphs">432</text>
<text class="b bt" x="446" y="284" textLength="23" lengthAdjust="spacingAndGlyphs">416</text>
<rect x="465.5" y="226.5" width="37" height="14" fill="#00ffff" stroke="#000000" stroke-width="1"/>
<text class="b" x="484" y="238" textLength="28" lengthAdjust="spacingAndGlyphs" text-anchor="middle" style="fill:#000;color:#000">Стоп</text>
<rect x="441" y="244" width="61" height="17" fill="#ece9d8"/>
<rect x="441" y="244" width="61" height="1" fill="#d9c9bb"/>
<rect x="441" y="244" width="1" height="17" fill="#e0d6c8"/>
<rect x="441" y="260" width="61" height="1" fill="#ffffff"/>
<rect x="501" y="244" width="1" height="17" fill="#ffffff"/>
<text class="b" x="500" y="257" text-anchor="end" style="fill:#000;color:#000">0</text>
<rect x="521.5" y="285.5" width="6" height="26" fill="#00ffff" stroke="#000000" stroke-width="1"/>
<rect x="527.5" y="294.5" width="2" height="9" fill="#00ffff" stroke="#000000" stroke-width="1"/>
<rect x="508.5" y="293.5" width="13" height="11" fill="#00ffff" stroke="#000000" stroke-width="1"/>
<rect x="511.5" y="294.5" width="9" height="9" fill="#00ffff" stroke="#000000" stroke-width="1"/>
<path d="M511.5,294.5L520.5,303.5M520.5,294.5L511.5,303.5" stroke="#000" stroke-width="1" fill="none"/>
<rect x="510.5" y="306.5" width="10" height="10" fill="#00ffff" stroke="#000000" stroke-width="1"/>
<rect x="533" y="298" width="10" height="1" fill="#c0c0c0"/>
<rect x="543" y="250" width="1" height="4" fill="#c0c0c0"/>
<rect x="543" y="256" width="1" height="4" fill="#c0c0c0"/>
<rect x="543" y="262" width="1" height="4" fill="#c0c0c0"/>
<rect x="543" y="268" width="1" height="4" fill="#c0c0c0"/>
<rect x="543" y="274" width="1" height="4" fill="#c0c0c0"/>
<rect x="543" y="280" width="1" height="4" fill="#c0c0c0"/>
<rect x="543" y="286" width="1" height="4" fill="#c0c0c0"/>
<rect x="543" y="292" width="1" height="4" fill="#c0c0c0"/>
<rect x="543" y="249" width="7" height="1" fill="#c0c0c0"/>
<rect x="559.5" y="242.5" width="9" height="1" fill="#00ffff" stroke="#000000" stroke-width="1"/>
<rect x="549.5" y="244.5" width="3" height="10" fill="#00ffff" stroke="#000000" stroke-width="1"/>
<rect x="552.5" y="243.5" width="22" height="38" fill="#00ffff" stroke="#000000" stroke-width="1"/>
<rect x="552" y="254" width="23" height="1" fill="#000000"/>
<rect x="563" y="246" width="1" height="1" fill="#000000"/>
<rect x="562" y="247" width="1" height="1" fill="#000000"/>
<rect x="564" y="247" width="1" height="1" fill="#000000"/>
<rect x="563" y="248" width="1" height="1" fill="#000000"/>
<rect x="553.5" y="256.5" width="15" height="11" fill="#00ffff" stroke="#000000" stroke-width="1"/>
<rect x="553.5" y="281.5" width="2" height="35" fill="#00ffff" stroke="#000000" stroke-width="1"/>
<rect x="571.5" y="281.5" width="2" height="35" fill="#00ffff" stroke="#000000" stroke-width="1"/>
<rect x="552" y="316" width="5" height="1" fill="#000000"/>
<rect x="570" y="316" width="5" height="1" fill="#000000"/>
<polygon points="553.5,281.5 573.5,281.5 564.2,310 562.8,310" fill="#00ffff" stroke="#000000" stroke-width="1" shape-rendering="auto"/>
<rect x="555" y="284" width="2" height="2" fill="#000000"/>
<rect x="570" y="284" width="2" height="2" fill="#000000"/>
<circle cx="563.5" cy="313.5" r="3.1" fill="#00ffff" stroke="#000" stroke-width="1" shape-rendering="auto"/>
<rect x="593" y="264" width="1" height="5" fill="#ffffff"/>
<rect x="588.5" y="222.5" width="10" height="3" fill="#00ffff" stroke="#000000" stroke-width="1"/>
<polygon points="587.5,225.5 599.5,225.5 602.5,231.5 602.5,255.5 599.5,261.5 587.5,261.5 584.5,255.5 584.5,231.5" fill="#00ffff" stroke="#000000" stroke-width="1" />
<rect x="585" y="231" width="18" height="1" fill="#000000"/>
<rect x="585" y="255" width="18" height="1" fill="#000000"/>
<rect x="588.5" y="261.5" width="11" height="3" fill="#00ffff" stroke="#000000" stroke-width="1"/>
<rect x="583" y="268" width="4" height="2" fill="#000000"/>
<rect x="599.5" y="267.5" width="4" height="2" fill="#00ffff" stroke="#000000" stroke-width="1"/>
<rect x="583.5" y="269.5" width="21" height="2" fill="#00ffff" stroke="#000000" stroke-width="1"/>
<rect x="583.5" y="271.5" width="2" height="45" fill="#00ffff" stroke="#000000" stroke-width="1"/>
<rect x="602.5" y="271.5" width="2" height="45" fill="#00ffff" stroke="#000000" stroke-width="1"/>
<rect x="585.5" y="271.5" width="17" height="23" fill="#00ffff" stroke="#000000" stroke-width="1"/>
<rect x="583.5" y="294.5" width="21" height="2" fill="#00ffff" stroke="#000000" stroke-width="1"/>
<rect x="587.7" y="281.7" width="11.6" height="10.6" fill="#00ffff" stroke="#000000" stroke-width="1.4"/>
<rect x="588" y="286" width="1" height="3" fill="#000000"/>
<rect x="598" y="283" width="1" height="2" fill="#000000"/>
<rect x="598" y="289" width="1" height="2" fill="#000000"/>
<polygon points="586.5,297 601.5,297 597,304.5 591,304.5" fill="#00ffff" stroke="#000000" stroke-width="1" shape-rendering="auto"/>
<polygon points="594,300 596,302 594,304 592,302" fill="#000000" stroke="#000000" stroke-width="0.5" shape-rendering="auto"/>
<rect x="591.5" y="306.5" width="5" height="2" fill="#00ffff" stroke="#000000" stroke-width="1"/>
<text class="b bt" x="545" y="234" textLength="23" lengthAdjust="spacingAndGlyphs">435</text>
<text class="b bt" x="509" y="278" textLength="23" lengthAdjust="spacingAndGlyphs">434</text>
<text class="b bt" x="612" y="284" textLength="23" lengthAdjust="spacingAndGlyphs">417</text>
<rect x="631.5" y="226.5" width="37" height="14" fill="#00ffff" stroke="#000000" stroke-width="1"/>
<text class="b" x="650" y="238" textLength="28" lengthAdjust="spacingAndGlyphs" text-anchor="middle" style="fill:#000;color:#000">Стоп</text>
<rect x="607" y="244" width="61" height="17" fill="#ece9d8"/>
<rect x="607" y="244" width="61" height="1" fill="#d9c9bb"/>
<rect x="607" y="244" width="1" height="17" fill="#e0d6c8"/>
<rect x="607" y="260" width="61" height="1" fill="#ffffff"/>
<rect x="667" y="244" width="1" height="17" fill="#ffffff"/>
<text class="b" x="666" y="257" text-anchor="end" style="fill:#000;color:#000">0</text>
<text class="l" x="417" y="210" textLength="18" lengthAdjust="spacingAndGlyphs">869</text>
<rect x="427" y="214" width="1" height="8" fill="#ffffff"/>
<text class="l" x="567" y="210" textLength="43" lengthAdjust="spacingAndGlyphs">880; 865</text>
<rect x="593" y="214" width="1" height="8" fill="#ffffff"/>
<rect x="228.5" y="340.5" width="69" height="53" fill="#00ffff" stroke="#000000" stroke-width="1"/>
<rect x="228.5" y="393.5" width="5" height="35" fill="#00ffff" stroke="#000000" stroke-width="1"/>
<rect x="292.5" y="393.5" width="5" height="35" fill="#00ffff" stroke="#000000" stroke-width="1"/>
<rect x="228" y="428" width="70" height="1" fill="#008080"/>
<polygon points="233.5,393.5 292.5,393.5 267.5,426.5 258.5,426.5" fill="#00ffff" stroke="#000000" stroke-width="1" shape-rendering="auto"/>
<rect x="260.5" y="347.5" width="6" height="5" fill="#00ffff" stroke="#000000" stroke-width="1"/>
<rect x="260.5" y="380.5" width="6" height="5" fill="#00ffff" stroke="#000000" stroke-width="1"/>
<rect x="245" y="358" width="37" height="11" fill="#ece9d8"/>
<rect x="245" y="358" width="37" height="1" fill="#d9c6b8"/>
<rect x="245" y="358" width="1" height="11" fill="#d9c6b8"/>
<rect x="245" y="368" width="37" height="1" fill="#ffffff"/>
<rect x="281" y="358" width="1" height="11" fill="#ffffff"/>
<text class="l" x="264.5" y="368" textLength="21" lengthAdjust="spacingAndGlyphs" text-anchor="middle" style="fill:#000;color:#000">БФ-9</text>
<rect x="217.5" y="362.5" width="2" height="4" fill="#00ffff" stroke="#000000" stroke-width="1"/>
<rect x="217.5" y="385.5" width="2" height="4" fill="#00ffff" stroke="#000000" stroke-width="1"/>
<polygon points="213.5,369.5 215.5,366.5 221.5,366.5 223.5,369.5 223.5,382.5 221.5,385.5 215.5,385.5 213.5,382.5" fill="#00ffff" stroke="#000000" stroke-width="1" />
<rect x="214" y="369" width="10" height="1" fill="#000000"/>
<rect x="214" y="382" width="10" height="1" fill="#000000"/>
<polygon points="224,371 228,375.5 224,380" fill="#000000" stroke="#000000" stroke-width="0.5" />
<text class="b bt" x="196" y="356" textLength="23" lengthAdjust="spacingAndGlyphs">338</text>
<text class="b bt" x="196" y="425" textLength="23" lengthAdjust="spacingAndGlyphs">942</text>
<rect x="262" y="428" width="1" height="3" fill="#ffffff"/>
<rect x="258" y="431" width="8" height="2" fill="#00ffff"/>
<rect x="258" y="437" width="8" height="2" fill="#00ffff"/>
<rect x="254" y="434" width="19" height="2" fill="#ffff00"/>
<rect x="271" y="434" width="2" height="6" fill="#ffff00"/>
<rect x="393.5" y="340.5" width="69" height="53" fill="#00ffff" stroke="#000000" stroke-width="1"/>
<rect x="393.5" y="393.5" width="5" height="35" fill="#00ffff" stroke="#000000" stroke-width="1"/>
<rect x="457.5" y="393.5" width="5" height="35" fill="#00ffff" stroke="#000000" stroke-width="1"/>
<rect x="393" y="428" width="70" height="1" fill="#008080"/>
<polygon points="398.5,393.5 457.5,393.5 432.5,426.5 423.5,426.5" fill="#00ffff" stroke="#000000" stroke-width="1" shape-rendering="auto"/>
<rect x="425.5" y="347.5" width="6" height="5" fill="#00ffff" stroke="#000000" stroke-width="1"/>
<rect x="425.5" y="380.5" width="6" height="5" fill="#00ffff" stroke="#000000" stroke-width="1"/>
<rect x="410" y="358" width="37" height="11" fill="#ece9d8"/>
<rect x="410" y="358" width="37" height="1" fill="#d9c6b8"/>
<rect x="410" y="358" width="1" height="11" fill="#d9c6b8"/>
<rect x="410" y="368" width="37" height="1" fill="#ffffff"/>
<rect x="446" y="358" width="1" height="11" fill="#ffffff"/>
<text class="l" x="429.5" y="368" textLength="26" lengthAdjust="spacingAndGlyphs" text-anchor="middle" style="fill:#000;color:#000">БФ-10</text>
<rect x="382.5" y="362.5" width="2" height="4" fill="#00ffff" stroke="#000000" stroke-width="1"/>
<rect x="382.5" y="385.5" width="2" height="4" fill="#00ffff" stroke="#000000" stroke-width="1"/>
<polygon points="378.5,369.5 380.5,366.5 386.5,366.5 388.5,369.5 388.5,382.5 386.5,385.5 380.5,385.5 378.5,382.5" fill="#00ffff" stroke="#000000" stroke-width="1" />
<rect x="379" y="369" width="10" height="1" fill="#000000"/>
<rect x="379" y="382" width="10" height="1" fill="#000000"/>
<polygon points="389,371 393,375.5 389,380" fill="#000000" stroke="#000000" stroke-width="0.5" />
<text class="b bt" x="361" y="356" textLength="23" lengthAdjust="spacingAndGlyphs">339</text>
<text class="b bt" x="361" y="425" textLength="23" lengthAdjust="spacingAndGlyphs">943</text>
<rect x="427" y="428" width="1" height="3" fill="#ffffff"/>
<rect x="423" y="431" width="8" height="2" fill="#00ffff"/>
<rect x="423" y="437" width="8" height="2" fill="#00ffff"/>
<rect x="419" y="434" width="19" height="2" fill="#ffff00"/>
<rect x="436" y="434" width="2" height="6" fill="#ffff00"/>
<rect x="559.5" y="340.5" width="69" height="53" fill="#00ffff" stroke="#000000" stroke-width="1"/>
<rect x="559.5" y="393.5" width="5" height="35" fill="#00ffff" stroke="#000000" stroke-width="1"/>
<rect x="623.5" y="393.5" width="5" height="35" fill="#00ffff" stroke="#000000" stroke-width="1"/>
<rect x="559" y="428" width="70" height="1" fill="#008080"/>
<polygon points="564.5,393.5 623.5,393.5 598.5,426.5 589.5,426.5" fill="#00ffff" stroke="#000000" stroke-width="1" shape-rendering="auto"/>
<rect x="591.5" y="347.5" width="6" height="5" fill="#00ffff" stroke="#000000" stroke-width="1"/>
<rect x="591.5" y="380.5" width="6" height="5" fill="#00ffff" stroke="#000000" stroke-width="1"/>
<rect x="576" y="358" width="37" height="11" fill="#ece9d8"/>
<rect x="576" y="358" width="37" height="1" fill="#d9c6b8"/>
<rect x="576" y="358" width="1" height="11" fill="#d9c6b8"/>
<rect x="576" y="368" width="37" height="1" fill="#ffffff"/>
<rect x="612" y="358" width="1" height="11" fill="#ffffff"/>
<text class="l" x="595.5" y="368" textLength="26" lengthAdjust="spacingAndGlyphs" text-anchor="middle" style="fill:#000;color:#000">БФ-11</text>
<rect x="548.5" y="362.5" width="2" height="4" fill="#00ffff" stroke="#000000" stroke-width="1"/>
<rect x="548.5" y="385.5" width="2" height="4" fill="#00ffff" stroke="#000000" stroke-width="1"/>
<polygon points="544.5,369.5 546.5,366.5 552.5,366.5 554.5,369.5 554.5,382.5 552.5,385.5 546.5,385.5 544.5,382.5" fill="#00ffff" stroke="#000000" stroke-width="1" />
<rect x="545" y="369" width="10" height="1" fill="#000000"/>
<rect x="545" y="382" width="10" height="1" fill="#000000"/>
<polygon points="555,371 559,375.5 555,380" fill="#000000" stroke="#000000" stroke-width="0.5" />
<text class="b bt" x="527" y="356" textLength="23" lengthAdjust="spacingAndGlyphs">340</text>
<text class="b bt" x="527" y="425" textLength="23" lengthAdjust="spacingAndGlyphs">944</text>
<rect x="593" y="428" width="1" height="3" fill="#ffffff"/>
<rect x="589" y="431" width="8" height="2" fill="#00ffff"/>
<rect x="589" y="437" width="8" height="2" fill="#00ffff"/>
<rect x="585" y="434" width="19" height="2" fill="#ffff00"/>
<rect x="602" y="434" width="2" height="6" fill="#ffff00"/>
<rect x="262" y="317" width="1" height="23" fill="#ffffff"/>
<rect x="427" y="317" width="1" height="23" fill="#ffffff"/>
<rect x="593" y="317" width="1" height="23" fill="#ffffff"/>
<rect x="427" y="328" width="1" height="6" fill="#00a0a0"/>
<rect x="428" y="328" width="6" height="1" fill="#00a0a0"/>
<path d="M427.5,323.8V327.5L433,333" stroke="#ffff00" stroke-width="2.6" fill="none" stroke-linecap="round" shape-rendering="auto"/>
<rect x="434" y="334" width="55" height="1" fill="#ffffff"/>
<text class="l" x="492" y="339" textLength="17" lengthAdjust="spacingAndGlyphs">217</text>
<text class="b bt" x="395" y="335" textLength="23" lengthAdjust="spacingAndGlyphs">889</text>
<rect x="659.5" y="410.5" width="6" height="26" fill="#00ffff" stroke="#000000" stroke-width="1"/>
<rect x="665.5" y="419.5" width="2" height="9" fill="#00ffff" stroke="#000000" stroke-width="1"/>
<rect x="646.5" y="418.5" width="13" height="11" fill="#00ffff" stroke="#000000" stroke-width="1"/>
<rect x="649.5" y="419.5" width="9" height="9" fill="#00ffff" stroke="#000000" stroke-width="1"/>
<path d="M649.5,419.5L658.5,428.5M658.5,419.5L649.5,428.5" stroke="#000" stroke-width="1" fill="none"/>
<rect x="648.5" y="431.5" width="10" height="10" fill="#00ffff" stroke="#000000" stroke-width="1"/>
<rect x="671" y="423" width="10" height="1" fill="#c0c0c0"/>
<rect x="681" y="375" width="1" height="4" fill="#c0c0c0"/>
<rect x="681" y="381" width="1" height="4" fill="#c0c0c0"/>
<rect x="681" y="387" width="1" height="4" fill="#c0c0c0"/>
<rect x="681" y="393" width="1" height="4" fill="#c0c0c0"/>
<rect x="681" y="399" width="1" height="4" fill="#c0c0c0"/>
<rect x="681" y="405" width="1" height="4" fill="#c0c0c0"/>
<rect x="681" y="411" width="1" height="4" fill="#c0c0c0"/>
<rect x="681" y="417" width="1" height="4" fill="#c0c0c0"/>
<rect x="681" y="374" width="7" height="1" fill="#c0c0c0"/>
<rect x="697.5" y="367.5" width="9" height="1" fill="#00ffff" stroke="#000000" stroke-width="1"/>
<rect x="687.5" y="369.5" width="3" height="10" fill="#00ffff" stroke="#000000" stroke-width="1"/>
<rect x="690.5" y="368.5" width="22" height="38" fill="#00ffff" stroke="#000000" stroke-width="1"/>
<rect x="690" y="379" width="23" height="1" fill="#000000"/>
<rect x="701" y="371" width="1" height="1" fill="#000000"/>
<rect x="700" y="372" width="1" height="1" fill="#000000"/>
<rect x="702" y="372" width="1" height="1" fill="#000000"/>
<rect x="701" y="373" width="1" height="1" fill="#000000"/>
<rect x="691.5" y="381.5" width="15" height="11" fill="#00ffff" stroke="#000000" stroke-width="1"/>
<rect x="691.5" y="406.5" width="2" height="35" fill="#00ffff" stroke="#000000" stroke-width="1"/>
<rect x="709.5" y="406.5" width="2" height="35" fill="#00ffff" stroke="#000000" stroke-width="1"/>
<rect x="690" y="441" width="5" height="1" fill="#000000"/>
<rect x="708" y="441" width="5" height="1" fill="#000000"/>
<polygon points="691.5,406.5 711.5,406.5 702.2,435 700.8,435" fill="#00ffff" stroke="#000000" stroke-width="1" shape-rendering="auto"/>
<rect x="693" y="409" width="2" height="2" fill="#000000"/>
<rect x="708" y="409" width="2" height="2" fill="#000000"/>
<circle cx="701.5" cy="438.5" r="3.1" fill="#00ffff" stroke="#000" stroke-width="1" shape-rendering="auto"/>
<rect x="731" y="389" width="1" height="5" fill="#ffffff"/>
<rect x="726.5" y="347.5" width="10" height="3" fill="#00ffff" stroke="#000000" stroke-width="1"/>
<polygon points="725.5,350.5 737.5,350.5 740.5,356.5 740.5,380.5 737.5,386.5 725.5,386.5 722.5,380.5 722.5,356.5" fill="#00ffff" stroke="#000000" stroke-width="1" />
<rect x="723" y="356" width="18" height="1" fill="#000000"/>
<rect x="723" y="380" width="18" height="1" fill="#000000"/>
<rect x="726.5" y="386.5" width="11" height="3" fill="#00ffff" stroke="#000000" stroke-width="1"/>
<rect x="721" y="393" width="4" height="2" fill="#000000"/>
<rect x="737.5" y="392.5" width="4" height="2" fill="#00ffff" stroke="#000000" stroke-width="1"/>
<rect x="721.5" y="394.5" width="21" height="2" fill="#00ffff" stroke="#000000" stroke-width="1"/>
<rect x="721.5" y="396.5" width="2" height="45" fill="#00ffff" stroke="#000000" stroke-width="1"/>
<rect x="740.5" y="396.5" width="2" height="45" fill="#00ffff" stroke="#000000" stroke-width="1"/>
<rect x="723.5" y="396.5" width="17" height="23" fill="#00ffff" stroke="#000000" stroke-width="1"/>
<rect x="721.5" y="419.5" width="21" height="2" fill="#00ffff" stroke="#000000" stroke-width="1"/>
<rect x="725.7" y="406.7" width="11.6" height="10.6" fill="#00ffff" stroke="#000000" stroke-width="1.4"/>
<rect x="726" y="411" width="1" height="3" fill="#000000"/>
<rect x="736" y="408" width="1" height="2" fill="#000000"/>
<rect x="736" y="414" width="1" height="2" fill="#000000"/>
<polygon points="724.5,422 739.5,422 735,429.5 729,429.5" fill="#00ffff" stroke="#000000" stroke-width="1" shape-rendering="auto"/>
<polygon points="732,425 734,427 732,429 730,427" fill="#000000" stroke="#000000" stroke-width="0.5" shape-rendering="auto"/>
<rect x="729.5" y="431.5" width="5" height="2" fill="#00ffff" stroke="#000000" stroke-width="1"/>
<text class="b bt" x="683" y="359" textLength="23" lengthAdjust="spacingAndGlyphs">331</text>
<text class="b bt" x="647" y="403" textLength="23" lengthAdjust="spacingAndGlyphs">330</text>
<text class="b bt" x="750" y="409" textLength="23" lengthAdjust="spacingAndGlyphs">321</text>
<rect x="769.5" y="351.5" width="37" height="14" fill="#00ffff" stroke="#000000" stroke-width="1"/>
<text class="b" x="788" y="363" textLength="28" lengthAdjust="spacingAndGlyphs" text-anchor="middle" style="fill:#000;color:#000">Стоп</text>
<rect x="745" y="369" width="61" height="17" fill="#ece9d8"/>
<rect x="745" y="369" width="61" height="1" fill="#d9c9bb"/>
<rect x="745" y="369" width="1" height="17" fill="#e0d6c8"/>
<rect x="745" y="385" width="61" height="1" fill="#ffffff"/>
<rect x="805" y="369" width="1" height="17" fill="#ffffff"/>
<text class="b" x="804" y="382" text-anchor="end" style="fill:#000;color:#000">0</text>
<rect x="815.5" y="410.5" width="6" height="26" fill="#00ffff" stroke="#000000" stroke-width="1"/>
<rect x="821.5" y="419.5" width="2" height="9" fill="#00ffff" stroke="#000000" stroke-width="1"/>
<rect x="802.5" y="418.5" width="13" height="11" fill="#00ffff" stroke="#000000" stroke-width="1"/>
<rect x="805.5" y="419.5" width="9" height="9" fill="#00ffff" stroke="#000000" stroke-width="1"/>
<path d="M805.5,419.5L814.5,428.5M814.5,419.5L805.5,428.5" stroke="#000" stroke-width="1" fill="none"/>
<rect x="804.5" y="431.5" width="10" height="10" fill="#00ffff" stroke="#000000" stroke-width="1"/>
<rect x="827" y="423" width="10" height="1" fill="#c0c0c0"/>
<rect x="837" y="375" width="1" height="4" fill="#c0c0c0"/>
<rect x="837" y="381" width="1" height="4" fill="#c0c0c0"/>
<rect x="837" y="387" width="1" height="4" fill="#c0c0c0"/>
<rect x="837" y="393" width="1" height="4" fill="#c0c0c0"/>
<rect x="837" y="399" width="1" height="4" fill="#c0c0c0"/>
<rect x="837" y="405" width="1" height="4" fill="#c0c0c0"/>
<rect x="837" y="411" width="1" height="4" fill="#c0c0c0"/>
<rect x="837" y="417" width="1" height="4" fill="#c0c0c0"/>
<rect x="837" y="374" width="7" height="1" fill="#c0c0c0"/>
<rect x="853.5" y="367.5" width="9" height="1" fill="#00ffff" stroke="#000000" stroke-width="1"/>
<rect x="843.5" y="369.5" width="3" height="10" fill="#00ffff" stroke="#000000" stroke-width="1"/>
<rect x="846.5" y="368.5" width="22" height="38" fill="#00ffff" stroke="#000000" stroke-width="1"/>
<rect x="846" y="379" width="23" height="1" fill="#000000"/>
<rect x="857" y="371" width="1" height="1" fill="#000000"/>
<rect x="856" y="372" width="1" height="1" fill="#000000"/>
<rect x="858" y="372" width="1" height="1" fill="#000000"/>
<rect x="857" y="373" width="1" height="1" fill="#000000"/>
<rect x="847.5" y="381.5" width="15" height="11" fill="#00ffff" stroke="#000000" stroke-width="1"/>
<rect x="847.5" y="406.5" width="2" height="35" fill="#00ffff" stroke="#000000" stroke-width="1"/>
<rect x="865.5" y="406.5" width="2" height="35" fill="#00ffff" stroke="#000000" stroke-width="1"/>
<rect x="846" y="441" width="5" height="1" fill="#000000"/>
<rect x="864" y="441" width="5" height="1" fill="#000000"/>
<polygon points="847.5,406.5 867.5,406.5 858.2,435 856.8,435" fill="#00ffff" stroke="#000000" stroke-width="1" shape-rendering="auto"/>
<rect x="849" y="409" width="2" height="2" fill="#000000"/>
<rect x="864" y="409" width="2" height="2" fill="#000000"/>
<circle cx="857.5" cy="438.5" r="3.1" fill="#00ffff" stroke="#000" stroke-width="1" shape-rendering="auto"/>
<rect x="887" y="389" width="1" height="5" fill="#ffffff"/>
<rect x="882.5" y="347.5" width="10" height="3" fill="#00ffff" stroke="#000000" stroke-width="1"/>
<polygon points="881.5,350.5 893.5,350.5 896.5,356.5 896.5,380.5 893.5,386.5 881.5,386.5 878.5,380.5 878.5,356.5" fill="#00ffff" stroke="#000000" stroke-width="1" />
<rect x="879" y="356" width="18" height="1" fill="#000000"/>
<rect x="879" y="380" width="18" height="1" fill="#000000"/>
<rect x="882.5" y="386.5" width="11" height="3" fill="#00ffff" stroke="#000000" stroke-width="1"/>
<rect x="877" y="393" width="4" height="2" fill="#000000"/>
<rect x="893.5" y="392.5" width="4" height="2" fill="#00ffff" stroke="#000000" stroke-width="1"/>
<rect x="877.5" y="394.5" width="21" height="2" fill="#00ffff" stroke="#000000" stroke-width="1"/>
<rect x="877.5" y="396.5" width="2" height="45" fill="#00ffff" stroke="#000000" stroke-width="1"/>
<rect x="896.5" y="396.5" width="2" height="45" fill="#00ffff" stroke="#000000" stroke-width="1"/>
<rect x="879.5" y="396.5" width="17" height="23" fill="#00ffff" stroke="#000000" stroke-width="1"/>
<rect x="877.5" y="419.5" width="21" height="2" fill="#00ffff" stroke="#000000" stroke-width="1"/>
<rect x="881.7" y="406.7" width="11.6" height="10.6" fill="#00ffff" stroke="#000000" stroke-width="1.4"/>
<rect x="882" y="411" width="1" height="3" fill="#000000"/>
<rect x="892" y="408" width="1" height="2" fill="#000000"/>
<rect x="892" y="414" width="1" height="2" fill="#000000"/>
<polygon points="880.5,422 895.5,422 891,429.5 885,429.5" fill="#00ffff" stroke="#000000" stroke-width="1" shape-rendering="auto"/>
<polygon points="888,425 890,427 888,429 886,427" fill="#000000" stroke="#000000" stroke-width="0.5" shape-rendering="auto"/>
<rect x="885.5" y="431.5" width="5" height="2" fill="#00ffff" stroke="#000000" stroke-width="1"/>
<text class="b bt" x="839" y="359" textLength="23" lengthAdjust="spacingAndGlyphs">333</text>
<text class="b bt" x="803" y="403" textLength="23" lengthAdjust="spacingAndGlyphs">332</text>
<text class="b bt" x="906" y="409" textLength="23" lengthAdjust="spacingAndGlyphs">322</text>
<rect x="925.5" y="351.5" width="37" height="14" fill="#00ffff" stroke="#000000" stroke-width="1"/>
<text class="b" x="944" y="363" textLength="28" lengthAdjust="spacingAndGlyphs" text-anchor="middle" style="fill:#000;color:#000">Стоп</text>
<rect x="901" y="369" width="61" height="17" fill="#ece9d8"/>
<rect x="901" y="369" width="61" height="1" fill="#d9c9bb"/>
<rect x="901" y="369" width="1" height="17" fill="#e0d6c8"/>
<rect x="901" y="385" width="61" height="1" fill="#ffffff"/>
<rect x="961" y="369" width="1" height="17" fill="#ffffff"/>
<text class="b" x="960" y="382" text-anchor="end" style="fill:#000;color:#000">0</text>
<text class="l" x="701" y="334" textLength="61" lengthAdjust="spacingAndGlyphs">514;516;523</text>
<rect x="731" y="336" width="1" height="11" fill="#ffffff"/>
<text class="l" x="878" y="334" textLength="18" lengthAdjust="spacingAndGlyphs">523</text>
<rect x="887" y="336" width="1" height="11" fill="#ffffff"/>
<rect x="55.5" y="449.5" width="69" height="53" fill="#00ffff" stroke="#000000" stroke-width="1"/>
<rect x="55.5" y="502.5" width="5" height="35" fill="#00ffff" stroke="#000000" stroke-width="1"/>
<rect x="119.5" y="502.5" width="5" height="35" fill="#00ffff" stroke="#000000" stroke-width="1"/>
<rect x="55" y="537" width="70" height="1" fill="#008080"/>
<polygon points="60.5,502.5 119.5,502.5 94.5,535.5 85.5,535.5" fill="#00ffff" stroke="#000000" stroke-width="1" shape-rendering="auto"/>
<rect x="87.5" y="456.5" width="6" height="5" fill="#00ffff" stroke="#000000" stroke-width="1"/>
<rect x="87.5" y="489.5" width="6" height="5" fill="#00ffff" stroke="#000000" stroke-width="1"/>
<rect x="72" y="467" width="37" height="11" fill="#ece9d8"/>
<rect x="72" y="467" width="37" height="1" fill="#d9c6b8"/>
<rect x="72" y="467" width="1" height="11" fill="#d9c6b8"/>
<rect x="72" y="477" width="37" height="1" fill="#ffffff"/>
<rect x="108" y="467" width="1" height="11" fill="#ffffff"/>
<text class="l" x="91.5" y="477" textLength="26" lengthAdjust="spacingAndGlyphs" text-anchor="middle" style="fill:#000;color:#000">БФ-17</text>
<rect x="44.5" y="471.5" width="2" height="4" fill="#00ffff" stroke="#000000" stroke-width="1"/>
<rect x="44.5" y="494.5" width="2" height="4" fill="#00ffff" stroke="#000000" stroke-width="1"/>
<polygon points="40.5,478.5 42.5,475.5 48.5,475.5 50.5,478.5 50.5,491.5 48.5,494.5 42.5,494.5 40.5,491.5" fill="#00ffff" stroke="#000000" stroke-width="1" />
<rect x="41" y="478" width="10" height="1" fill="#000000"/>
<rect x="41" y="491" width="10" height="1" fill="#000000"/>
<polygon points="51,480 55,484.5 51,489" fill="#000000" stroke="#000000" stroke-width="0.5" />
<text class="b bt" x="23" y="465" textLength="23" lengthAdjust="spacingAndGlyphs">229</text>
<text class="b bt" x="24" y="526" textLength="23" lengthAdjust="spacingAndGlyphs">964</text>
<text class="l" x="76" y="426.4" textLength="18" lengthAdjust="spacingAndGlyphs">889</text>
<rect x="88" y="429" width="1" height="20" fill="#ffffff"/>
<rect x="88" y="537" width="1" height="3" fill="#ffffff"/>
<rect x="85" y="540" width="8" height="2" fill="#00ffff"/>
<rect x="85" y="546" width="8" height="2" fill="#00ffff"/>
<rect x="81" y="543" width="19" height="2" fill="#ffff00"/>
<rect x="98" y="543" width="2" height="6" fill="#ffff00"/>
<rect x="697.5" y="449.5" width="69" height="53" fill="#00ffff" stroke="#000000" stroke-width="1"/>
<rect x="697.5" y="502.5" width="5" height="35" fill="#00ffff" stroke="#000000" stroke-width="1"/>
<rect x="761.5" y="502.5" width="5" height="35" fill="#00ffff" stroke="#000000" stroke-width="1"/>
<rect x="697" y="537" width="70" height="1" fill="#008080"/>
<polygon points="702.5,502.5 761.5,502.5 736.5,535.5 727.5,535.5" fill="#00ffff" stroke="#000000" stroke-width="1" shape-rendering="auto"/>
<rect x="729.5" y="456.5" width="6" height="5" fill="#00ffff" stroke="#000000" stroke-width="1"/>
<rect x="729.5" y="489.5" width="6" height="5" fill="#00ffff" stroke="#000000" stroke-width="1"/>
<rect x="714" y="467" width="37" height="11" fill="#ece9d8"/>
<rect x="714" y="467" width="37" height="1" fill="#d9c6b8"/>
<rect x="714" y="467" width="1" height="11" fill="#d9c6b8"/>
<rect x="714" y="477" width="37" height="1" fill="#ffffff"/>
<rect x="750" y="467" width="1" height="11" fill="#ffffff"/>
<text class="l" x="733.5" y="477" textLength="26" lengthAdjust="spacingAndGlyphs" text-anchor="middle" style="fill:#000;color:#000">БФ-12</text>
<rect x="686.5" y="471.5" width="2" height="4" fill="#00ffff" stroke="#000000" stroke-width="1"/>
<rect x="686.5" y="494.5" width="2" height="4" fill="#00ffff" stroke="#000000" stroke-width="1"/>
<polygon points="682.5,478.5 684.5,475.5 690.5,475.5 692.5,478.5 692.5,491.5 690.5,494.5 684.5,494.5 682.5,491.5" fill="#00ffff" stroke="#000000" stroke-width="1" />
<rect x="683" y="478" width="10" height="1" fill="#000000"/>
<rect x="683" y="491" width="10" height="1" fill="#000000"/>
<polygon points="693,480 697,484.5 693,489" fill="#000000" stroke="#000000" stroke-width="0.5" />
<text class="b bt" x="664" y="465" textLength="23" lengthAdjust="spacingAndGlyphs">227</text>
<text class="b bt" x="665" y="534" textLength="23" lengthAdjust="spacingAndGlyphs">949</text>
<rect x="853.5" y="449.5" width="69" height="53" fill="#00ffff" stroke="#000000" stroke-width="1"/>
<rect x="853.5" y="502.5" width="5" height="35" fill="#00ffff" stroke="#000000" stroke-width="1"/>
<rect x="917.5" y="502.5" width="5" height="35" fill="#00ffff" stroke="#000000" stroke-width="1"/>
<rect x="853" y="537" width="70" height="1" fill="#008080"/>
<polygon points="858.5,502.5 917.5,502.5 892.5,535.5 883.5,535.5" fill="#00ffff" stroke="#000000" stroke-width="1" shape-rendering="auto"/>
<rect x="885.5" y="456.5" width="6" height="5" fill="#00ffff" stroke="#000000" stroke-width="1"/>
<rect x="885.5" y="489.5" width="6" height="5" fill="#00ffff" stroke="#000000" stroke-width="1"/>
<rect x="870" y="467" width="37" height="11" fill="#ece9d8"/>
<rect x="870" y="467" width="37" height="1" fill="#d9c6b8"/>
<rect x="870" y="467" width="1" height="11" fill="#d9c6b8"/>
<rect x="870" y="477" width="37" height="1" fill="#ffffff"/>
<rect x="906" y="467" width="1" height="11" fill="#ffffff"/>
<text class="l" x="889.5" y="477" textLength="26" lengthAdjust="spacingAndGlyphs" text-anchor="middle" style="fill:#000;color:#000">БФ-13</text>
<rect x="842.5" y="471.5" width="2" height="4" fill="#00ffff" stroke="#000000" stroke-width="1"/>
<rect x="842.5" y="494.5" width="2" height="4" fill="#00ffff" stroke="#000000" stroke-width="1"/>
<polygon points="838.5,478.5 840.5,475.5 846.5,475.5 848.5,478.5 848.5,491.5 846.5,494.5 840.5,494.5 838.5,491.5" fill="#00ffff" stroke="#000000" stroke-width="1" />
<rect x="839" y="478" width="10" height="1" fill="#000000"/>
<rect x="839" y="491" width="10" height="1" fill="#000000"/>
<polygon points="849,480 853,484.5 849,489" fill="#000000" stroke="#000000" stroke-width="0.5" />
<text class="b bt" x="821" y="465" textLength="23" lengthAdjust="spacingAndGlyphs">228</text>
<text class="b bt" x="822" y="534" textLength="23" lengthAdjust="spacingAndGlyphs">950</text>
<rect x="731" y="537" width="1" height="3" fill="#ffffff"/>
<rect x="727" y="540" width="8" height="2" fill="#00ffff"/>
<rect x="727" y="546" width="8" height="2" fill="#00ffff"/>
<rect x="723" y="543" width="19" height="2" fill="#ffff00"/>
<rect x="740" y="543" width="2" height="6" fill="#ffff00"/>
<rect x="887" y="537" width="1" height="3" fill="#ffffff"/>
<rect x="883" y="540" width="8" height="2" fill="#00ffff"/>
<rect x="883" y="546" width="8" height="2" fill="#00ffff"/>
<rect x="879" y="543" width="19" height="2" fill="#ffff00"/>
<rect x="896" y="543" width="2" height="6" fill="#ffff00"/>
<rect x="731" y="442" width="1" height="7" fill="#ffffff"/>
<rect x="887" y="442" width="1" height="7" fill="#ffffff"/>
<rect x="262" y="440" width="1" height="20" fill="#ffffff"/>
<rect x="199" y="459" width="64" height="1" fill="#ffffff"/>
<rect x="199" y="459" width="1" height="43" fill="#ffffff"/>
<rect x="427" y="440" width="1" height="20" fill="#ffffff"/>
<rect x="301" y="459" width="127" height="1" fill="#ffffff"/>
<rect x="301" y="459" width="1" height="43" fill="#ffffff"/>
<rect x="593" y="440" width="1" height="36" fill="#ffffff"/>
<rect x="404" y="475" width="190" height="1" fill="#ffffff"/>
<rect x="404" y="475" width="1" height="27" fill="#ffffff"/>
<rect x="194.5" y="502.5" width="10" height="3" fill="#00ffff" stroke="#000000" stroke-width="1"/>
<polygon points="193.5,505.5 205.5,505.5 208.5,511.5 208.5,535.5 205.5,541.5 193.5,541.5 190.5,535.5 190.5,511.5" fill="#00ffff" stroke="#000000" stroke-width="1" />
<rect x="191" y="511" width="18" height="1" fill="#000000"/>
<rect x="191" y="535" width="18" height="1" fill="#000000"/>
<rect x="194.5" y="541.5" width="11" height="3" fill="#00ffff" stroke="#000000" stroke-width="1"/>
<rect x="296.5" y="502.5" width="10" height="3" fill="#00ffff" stroke="#000000" stroke-width="1"/>
<polygon points="295.5,505.5 307.5,505.5 310.5,511.5 310.5,535.5 307.5,541.5 295.5,541.5 292.5,535.5 292.5,511.5" fill="#00ffff" stroke="#000000" stroke-width="1" />
<rect x="293" y="511" width="18" height="1" fill="#000000"/>
<rect x="293" y="535" width="18" height="1" fill="#000000"/>
<rect x="296.5" y="541.5" width="11" height="3" fill="#00ffff" stroke="#000000" stroke-width="1"/>
<rect x="398.5" y="502.5" width="10" height="3" fill="#00ffff" stroke="#000000" stroke-width="1"/>
<polygon points="397.5,505.5 409.5,505.5 412.5,511.5 412.5,535.5 409.5,541.5 397.5,541.5 394.5,535.5 394.5,511.5" fill="#00ffff" stroke="#000000" stroke-width="1" />
<rect x="395" y="511" width="18" height="1" fill="#000000"/>
<rect x="395" y="535" width="18" height="1" fill="#000000"/>
<rect x="398.5" y="541.5" width="11" height="3" fill="#00ffff" stroke="#000000" stroke-width="1"/>
<rect x="518.5" y="517.5" width="6" height="26" fill="#00ffff" stroke="#000000" stroke-width="1"/>
<rect x="524.5" y="526.5" width="2" height="9" fill="#00ffff" stroke="#000000" stroke-width="1"/>
<rect x="505.5" y="525.5" width="13" height="11" fill="#00ffff" stroke="#000000" stroke-width="1"/>
<rect x="508.5" y="526.5" width="9" height="9" fill="#00ffff" stroke="#000000" stroke-width="1"/>
<path d="M508.5,526.5L517.5,535.5M517.5,526.5L508.5,535.5" stroke="#000" stroke-width="1" fill="none"/>
<rect x="507.5" y="538.5" width="10" height="10" fill="#00ffff" stroke="#000000" stroke-width="1"/>
<text class="b bt" x="505" y="510" textLength="23" lengthAdjust="spacingAndGlyphs">231</text>
<rect x="199" y="545" width="1" height="51" fill="#ffffff"/>
<rect x="301" y="545" width="1" height="51" fill="#ffffff"/>
<rect x="404" y="545" width="1" height="51" fill="#ffffff"/>
<rect x="88" y="548" width="1" height="15" fill="#ffffff"/>
<rect x="51" y="562" width="38" height="1" fill="#ffffff"/>
<rect x="51" y="562" width="1" height="17" fill="#ffffff"/>
<rect x="51" y="584" width="1" height="6" fill="#00a0a0"/>
<rect x="52" y="584" width="6" height="1" fill="#00a0a0"/>
<path d="M51.5,579.8V583.5L57,589" stroke="#ffff00" stroke-width="2.6" fill="none" stroke-linecap="round" shape-rendering="auto"/>
<rect x="51" y="590" width="1" height="114" fill="#ffffff"/>
<rect x="58" y="584" width="16" height="1" fill="#ffffff"/>
<rect x="73" y="584" width="1" height="9" fill="#ffffff"/>
<ellipse cx="73.5" cy="595.5" rx="5" ry="3" fill="#00ffff" stroke="#000" stroke-width="1" shape-rendering="auto"/>
<rect x="73" y="599" width="1" height="56" fill="#ffffff"/>
<text class="b bt" x="18" y="590" textLength="23" lengthAdjust="spacingAndGlyphs">890</text>
<text class="s" x="83.5" y="600" textLength="14.8" lengthAdjust="spacingAndGlyphs">890</text>
<text class="l2" x="21" y="666" textLength="24" lengthAdjust="spacingAndGlyphs">М/У5</text>
<rect x="65" y="716" width="52" height="13" fill="#00ffff"/>
<rect x="94" y="702" width="23" height="27" fill="#00ffff"/>
<rect x="94" y="701" width="23" height="2" fill="#604848"/>
<rect x="105" y="705" width="12" height="23" fill="#00ffff"/>
<rect x="105" y="705" width="2" height="23" fill="#000000"/>
<rect x="105" y="704" width="12" height="2" fill="#000000"/>
<rect x="116" y="705" width="1" height="23" fill="#604848"/>
<rect x="105" y="727" width="12" height="1" fill="#000000"/>
<rect x="114" y="713" width="2" height="1" fill="#604848"/>
<rect x="60.5" y="684.5" width="5" height="32" fill="#00ffff" stroke="#604848" stroke-width="1"/>
<rect x="65.5" y="681.5" width="29" height="35" fill="#00ffff" stroke="#000000" stroke-width="1"/>
<rect x="68" y="681" width="1" height="36" fill="#000000"/>
<rect x="77" y="681" width="1" height="36" fill="#000000"/>
<rect x="68.5" y="666.5" width="26" height="15" fill="#00ffff" stroke="#000000" stroke-width="1"/>
<rect x="87" y="666" width="1" height="16" fill="#604848"/>
<rect x="78" y="673" width="17" height="1" fill="#604848"/>
<rect x="68.5" y="666.5" width="9" height="10" fill="#00ffff" stroke="#000000" stroke-width="1"/>
<rect x="68" y="655" width="2" height="27" fill="#000000"/>
<rect x="68.5" y="655.5" width="10" height="11" fill="#00ffff" stroke="#000000" stroke-width="1"/>
<rect x="78" y="655" width="1" height="12" fill="#604848"/>
<polyline points="69.5,656.5 73,664.5 74,664.5 77.5,656.5" fill="none" stroke="#000000" stroke-width="1.3" shape-rendering="auto"/>
<rect x="73" y="656" width="1" height="57" fill="#6a5c5c"/>
<rect x="70.5" y="699.5" width="6" height="7" fill="#00ffff" stroke="#000000" stroke-width="1"/>
<rect x="65" y="702" width="16" height="1" fill="#000000"/>
<rect x="88" y="681" width="1" height="48" fill="#000000"/>
<rect x="94" y="681" width="1" height="48" fill="#000000"/>
<rect x="88" y="687" width="7" height="1" fill="#000000"/>
<rect x="88" y="692" width="7" height="1" fill="#000000"/>
<rect x="88" y="698" width="7" height="1" fill="#000000"/>
<rect x="88" y="704" width="7" height="1" fill="#000000"/>
<rect x="88" y="709" width="7" height="1" fill="#000000"/>
<rect x="88" y="714" width="7" height="1" fill="#000000"/>
<rect x="88" y="718" width="7" height="1" fill="#000000"/>
<rect x="88" y="723" width="7" height="1" fill="#000000"/>
<rect x="65" y="716" width="1" height="13" fill="#000000"/>
<rect x="67" y="716" width="1" height="8" fill="#000000"/>
<rect x="64" y="727" width="3" height="2" fill="#000000"/>
<rect x="87" y="727" width="3" height="2" fill="#000000"/>
<rect x="93" y="727" width="3" height="2" fill="#000000"/>
<path d="M49.5,704.5h5v3h-1.5l3,4.5v14.5q0,1.5 -1.5,1.5h-5.5q-1.5,0 -1.5,-1.5v-14.5l3,-4.5h-1.5z" fill="#00ffff" stroke="#000" stroke-width="1" shape-rendering="auto"/>
<rect x="50" y="707" width="4" height="1" fill="#000000"/>
<polygon points="149,596 199,596 204,600 204,604 199,609 196,602 144,602" fill="url(#hatch)"/>
<rect x="142.5" y="601.5" width="57" height="9" rx="4.5" ry="4.5" fill="#004848" stroke="#00ffff" stroke-width="1" shape-rendering="auto"/>
<rect x="147" y="603" width="48" height="4" fill="#003838"/>
<rect x="147" y="607" width="48" height="3" fill="#005a5a"/>
<polygon points="150,603 156,603 151,607" fill="#909090" stroke="none" stroke-width="0" />
<circle cx="147" cy="606" r="3.4" fill="#00ffff" stroke="#000" stroke-width="1.2" shape-rendering="auto"/>
<path d="M144,606L147,605.1L150,606L147,606.9zM147,603L147.9,606L147,609L146.1,606z" fill="#003c3c" shape-rendering="auto"/>
<circle cx="194.8" cy="606" r="2.8" fill="#00ffff" stroke="#000" stroke-width="2" shape-rendering="auto"/>
<text class="b bt" x="162" y="583" textLength="22" lengthAdjust="spacingAndGlyphs">134</text>
<rect x="149" y="611" width="1" height="26" fill="#ffffff"/>
<rect x="149" y="642" width="1" height="6" fill="#00a0a0"/>
<rect x="150" y="642" width="6" height="1" fill="#00a0a0"/>
<path d="M149.5,637.8V641.5L155,647" stroke="#ffff00" stroke-width="2.6" fill="none" stroke-linecap="round" shape-rendering="auto"/>
<rect x="149" y="648" width="1" height="56" fill="#ffffff"/>
<rect x="157" y="642" width="15" height="1" fill="#ffffff"/>
<rect x="171" y="642" width="1" height="4" fill="#ffffff"/>
<ellipse cx="171.5" cy="648.5" rx="5" ry="3" fill="#00ffff" stroke="#000" stroke-width="1" shape-rendering="auto"/>
<rect x="171" y="652" width="1" height="3" fill="#ffffff"/>
<text class="b bt" x="116.8" y="648" textLength="23" lengthAdjust="spacingAndGlyphs">776</text>
<text class="s" x="182" y="645" textLength="14" lengthAdjust="spacingAndGlyphs">776</text>
<text class="l2" x="118" y="666" textLength="24" lengthAdjust="spacingAndGlyphs">М/У1</text>
<rect x="163" y="716" width="52" height="13" fill="#00ffff"/>
<rect x="192" y="702" width="23" height="27" fill="#00ffff"/>
<rect x="192" y="701" width="23" height="2" fill="#604848"/>
<rect x="203" y="705" width="12" height="23" fill="#00ffff"/>
<rect x="203" y="705" width="2" height="23" fill="#000000"/>
<rect x="203" y="704" width="12" height="2" fill="#000000"/>
<rect x="214" y="705" width="1" height="23" fill="#604848"/>
<rect x="203" y="727" width="12" height="1" fill="#000000"/>
<rect x="212" y="713" width="2" height="1" fill="#604848"/>
<rect x="158.5" y="684.5" width="5" height="32" fill="#00ffff" stroke="#604848" stroke-width="1"/>
<rect x="163.5" y="681.5" width="29" height="35" fill="#00ffff" stroke="#000000" stroke-width="1"/>
<rect x="166" y="681" width="1" height="36" fill="#000000"/>
<rect x="175" y="681" width="1" height="36" fill="#000000"/>
<rect x="166.5" y="666.5" width="26" height="15" fill="#00ffff" stroke="#000000" stroke-width="1"/>
<rect x="185" y="666" width="1" height="16" fill="#604848"/>
<rect x="176" y="673" width="17" height="1" fill="#604848"/>
<rect x="166.5" y="666.5" width="9" height="10" fill="#00ffff" stroke="#000000" stroke-width="1"/>
<rect x="166" y="655" width="2" height="27" fill="#000000"/>
<rect x="166.5" y="655.5" width="10" height="11" fill="#00ffff" stroke="#000000" stroke-width="1"/>
<rect x="176" y="655" width="1" height="12" fill="#604848"/>
<polyline points="167.5,656.5 171,664.5 172,664.5 175.5,656.5" fill="none" stroke="#000000" stroke-width="1.3" shape-rendering="auto"/>
<rect x="171" y="656" width="1" height="57" fill="#6a5c5c"/>
<rect x="168.5" y="699.5" width="6" height="7" fill="#00ffff" stroke="#000000" stroke-width="1"/>
<rect x="163" y="702" width="16" height="1" fill="#000000"/>
<rect x="186" y="681" width="1" height="48" fill="#000000"/>
<rect x="192" y="681" width="1" height="48" fill="#000000"/>
<rect x="186" y="687" width="7" height="1" fill="#000000"/>
<rect x="186" y="692" width="7" height="1" fill="#000000"/>
<rect x="186" y="698" width="7" height="1" fill="#000000"/>
<rect x="186" y="704" width="7" height="1" fill="#000000"/>
<rect x="186" y="709" width="7" height="1" fill="#000000"/>
<rect x="186" y="714" width="7" height="1" fill="#000000"/>
<rect x="186" y="718" width="7" height="1" fill="#000000"/>
<rect x="186" y="723" width="7" height="1" fill="#000000"/>
<rect x="163" y="716" width="1" height="13" fill="#000000"/>
<rect x="165" y="716" width="1" height="8" fill="#000000"/>
<rect x="162" y="727" width="3" height="2" fill="#000000"/>
<rect x="185" y="727" width="3" height="2" fill="#000000"/>
<rect x="191" y="727" width="3" height="2" fill="#000000"/>
<path d="M147.5,704.5h5v3h-1.5l3,4.5v14.5q0,1.5 -1.5,1.5h-5.5q-1.5,0 -1.5,-1.5v-14.5l3,-4.5h-1.5z" fill="#00ffff" stroke="#000" stroke-width="1" shape-rendering="auto"/>
<rect x="148" y="707" width="4" height="1" fill="#000000"/>
<polygon points="252,596 302,596 307,600 307,604 302,609 299,602 247,602" fill="url(#hatch)"/>
<rect x="245.5" y="601.5" width="57" height="9" rx="4.5" ry="4.5" fill="#004848" stroke="#00ffff" stroke-width="1" shape-rendering="auto"/>
<rect x="250" y="603" width="48" height="4" fill="#003838"/>
<rect x="250" y="607" width="48" height="3" fill="#005a5a"/>
<polygon points="253,603 259,603 254,607" fill="#909090" stroke="none" stroke-width="0" />
<circle cx="250" cy="606" r="3.4" fill="#00ffff" stroke="#000" stroke-width="1.2" shape-rendering="auto"/>
<path d="M247,606L250,605.1L253,606L250,606.9zM250,603L250.9,606L250,609L249.1,606z" fill="#003c3c" shape-rendering="auto"/>
<circle cx="297.8" cy="606" r="2.8" fill="#00ffff" stroke="#000" stroke-width="2" shape-rendering="auto"/>
<text class="b bt" x="265" y="583" textLength="22" lengthAdjust="spacingAndGlyphs">135</text>
<rect x="250" y="611" width="1" height="26" fill="#ffffff"/>
<rect x="250" y="642" width="1" height="6" fill="#00a0a0"/>
<rect x="251" y="642" width="6" height="1" fill="#00a0a0"/>
<path d="M250.5,637.8V641.5L256,647" stroke="#ffff00" stroke-width="2.6" fill="none" stroke-linecap="round" shape-rendering="auto"/>
<rect x="250" y="648" width="1" height="56" fill="#ffffff"/>
<rect x="258" y="642" width="15" height="1" fill="#ffffff"/>
<rect x="272" y="642" width="1" height="4" fill="#ffffff"/>
<ellipse cx="272.5" cy="648.5" rx="5" ry="3" fill="#00ffff" stroke="#000" stroke-width="1" shape-rendering="auto"/>
<rect x="272" y="652" width="1" height="3" fill="#ffffff"/>
<text class="b bt" x="217.8" y="648" textLength="23" lengthAdjust="spacingAndGlyphs">777</text>
<text class="s" x="283" y="645" textLength="14" lengthAdjust="spacingAndGlyphs">777</text>
<text class="l2" x="219" y="666" textLength="24" lengthAdjust="spacingAndGlyphs">М/У2</text>
<rect x="264" y="716" width="52" height="13" fill="#00ffff"/>
<rect x="293" y="702" width="23" height="27" fill="#00ffff"/>
<rect x="293" y="701" width="23" height="2" fill="#604848"/>
<rect x="304" y="705" width="12" height="23" fill="#00ffff"/>
<rect x="304" y="705" width="2" height="23" fill="#000000"/>
<rect x="304" y="704" width="12" height="2" fill="#000000"/>
<rect x="315" y="705" width="1" height="23" fill="#604848"/>
<rect x="304" y="727" width="12" height="1" fill="#000000"/>
<rect x="313" y="713" width="2" height="1" fill="#604848"/>
<rect x="259.5" y="684.5" width="5" height="32" fill="#00ffff" stroke="#604848" stroke-width="1"/>
<rect x="264.5" y="681.5" width="29" height="35" fill="#00ffff" stroke="#000000" stroke-width="1"/>
<rect x="267" y="681" width="1" height="36" fill="#000000"/>
<rect x="276" y="681" width="1" height="36" fill="#000000"/>
<rect x="267.5" y="666.5" width="26" height="15" fill="#00ffff" stroke="#000000" stroke-width="1"/>
<rect x="286" y="666" width="1" height="16" fill="#604848"/>
<rect x="277" y="673" width="17" height="1" fill="#604848"/>
<rect x="267.5" y="666.5" width="9" height="10" fill="#00ffff" stroke="#000000" stroke-width="1"/>
<rect x="267" y="655" width="2" height="27" fill="#000000"/>
<rect x="267.5" y="655.5" width="10" height="11" fill="#00ffff" stroke="#000000" stroke-width="1"/>
<rect x="277" y="655" width="1" height="12" fill="#604848"/>
<polyline points="268.5,656.5 272,664.5 273,664.5 276.5,656.5" fill="none" stroke="#000000" stroke-width="1.3" shape-rendering="auto"/>
<rect x="272" y="656" width="1" height="57" fill="#6a5c5c"/>
<rect x="269.5" y="699.5" width="6" height="7" fill="#00ffff" stroke="#000000" stroke-width="1"/>
<rect x="264" y="702" width="16" height="1" fill="#000000"/>
<rect x="287" y="681" width="1" height="48" fill="#000000"/>
<rect x="293" y="681" width="1" height="48" fill="#000000"/>
<rect x="287" y="687" width="7" height="1" fill="#000000"/>
<rect x="287" y="692" width="7" height="1" fill="#000000"/>
<rect x="287" y="698" width="7" height="1" fill="#000000"/>
<rect x="287" y="704" width="7" height="1" fill="#000000"/>
<rect x="287" y="709" width="7" height="1" fill="#000000"/>
<rect x="287" y="714" width="7" height="1" fill="#000000"/>
<rect x="287" y="718" width="7" height="1" fill="#000000"/>
<rect x="287" y="723" width="7" height="1" fill="#000000"/>
<rect x="264" y="716" width="1" height="13" fill="#000000"/>
<rect x="266" y="716" width="1" height="8" fill="#000000"/>
<rect x="263" y="727" width="3" height="2" fill="#000000"/>
<rect x="286" y="727" width="3" height="2" fill="#000000"/>
<rect x="292" y="727" width="3" height="2" fill="#000000"/>
<path d="M248.5,704.5h5v3h-1.5l3,4.5v14.5q0,1.5 -1.5,1.5h-5.5q-1.5,0 -1.5,-1.5v-14.5l3,-4.5h-1.5z" fill="#00ffff" stroke="#000" stroke-width="1" shape-rendering="auto"/>
<rect x="249" y="707" width="4" height="1" fill="#000000"/>
<polygon points="355,596 405,596 410,600 410,604 405,609 402,602 350,602" fill="url(#hatch)"/>
<rect x="348.5" y="601.5" width="57" height="9" rx="4.5" ry="4.5" fill="#004848" stroke="#00ffff" stroke-width="1" shape-rendering="auto"/>
<rect x="353" y="603" width="48" height="4" fill="#003838"/>
<rect x="353" y="607" width="48" height="3" fill="#005a5a"/>
<polygon points="356,603 362,603 357,607" fill="#909090" stroke="none" stroke-width="0" />
<circle cx="353" cy="606" r="3.4" fill="#00ffff" stroke="#000" stroke-width="1.2" shape-rendering="auto"/>
<path d="M350,606L353,605.1L356,606L353,606.9zM353,603L353.9,606L353,609L352.1,606z" fill="#003c3c" shape-rendering="auto"/>
<circle cx="400.8" cy="606" r="2.8" fill="#00ffff" stroke="#000" stroke-width="2" shape-rendering="auto"/>
<text class="b bt" x="368" y="583" textLength="22" lengthAdjust="spacingAndGlyphs">136</text>
<rect x="351" y="611" width="1" height="26" fill="#ffffff"/>
<rect x="351" y="642" width="1" height="6" fill="#00a0a0"/>
<rect x="352" y="642" width="6" height="1" fill="#00a0a0"/>
<path d="M351.5,637.8V641.5L357,647" stroke="#ffff00" stroke-width="2.6" fill="none" stroke-linecap="round" shape-rendering="auto"/>
<rect x="351" y="648" width="1" height="56" fill="#ffffff"/>
<rect x="359" y="642" width="15" height="1" fill="#ffffff"/>
<rect x="373" y="642" width="1" height="4" fill="#ffffff"/>
<ellipse cx="373.5" cy="648.5" rx="5" ry="3" fill="#00ffff" stroke="#000" stroke-width="1" shape-rendering="auto"/>
<rect x="373" y="652" width="1" height="3" fill="#ffffff"/>
<text class="b bt" x="318.8" y="648" textLength="23" lengthAdjust="spacingAndGlyphs">778</text>
<text class="s" x="384" y="645" textLength="14" lengthAdjust="spacingAndGlyphs">778</text>
<text class="l2" x="320" y="666" textLength="24" lengthAdjust="spacingAndGlyphs">М/У3</text>
<rect x="365" y="716" width="52" height="13" fill="#00ffff"/>
<rect x="394" y="702" width="23" height="27" fill="#00ffff"/>
<rect x="394" y="701" width="23" height="2" fill="#604848"/>
<rect x="405" y="705" width="12" height="23" fill="#00ffff"/>
<rect x="405" y="705" width="2" height="23" fill="#000000"/>
<rect x="405" y="704" width="12" height="2" fill="#000000"/>
<rect x="416" y="705" width="1" height="23" fill="#604848"/>
<rect x="405" y="727" width="12" height="1" fill="#000000"/>
<rect x="414" y="713" width="2" height="1" fill="#604848"/>
<rect x="360.5" y="684.5" width="5" height="32" fill="#00ffff" stroke="#604848" stroke-width="1"/>
<rect x="365.5" y="681.5" width="29" height="35" fill="#00ffff" stroke="#000000" stroke-width="1"/>
<rect x="368" y="681" width="1" height="36" fill="#000000"/>
<rect x="377" y="681" width="1" height="36" fill="#000000"/>
<rect x="368.5" y="666.5" width="26" height="15" fill="#00ffff" stroke="#000000" stroke-width="1"/>
<rect x="387" y="666" width="1" height="16" fill="#604848"/>
<rect x="378" y="673" width="17" height="1" fill="#604848"/>
<rect x="368.5" y="666.5" width="9" height="10" fill="#00ffff" stroke="#000000" stroke-width="1"/>
<rect x="368" y="655" width="2" height="27" fill="#000000"/>
<rect x="368.5" y="655.5" width="10" height="11" fill="#00ffff" stroke="#000000" stroke-width="1"/>
<rect x="378" y="655" width="1" height="12" fill="#604848"/>
<polyline points="369.5,656.5 373,664.5 374,664.5 377.5,656.5" fill="none" stroke="#000000" stroke-width="1.3" shape-rendering="auto"/>
<rect x="373" y="656" width="1" height="57" fill="#6a5c5c"/>
<rect x="370.5" y="699.5" width="6" height="7" fill="#00ffff" stroke="#000000" stroke-width="1"/>
<rect x="365" y="702" width="16" height="1" fill="#000000"/>
<rect x="388" y="681" width="1" height="48" fill="#000000"/>
<rect x="394" y="681" width="1" height="48" fill="#000000"/>
<rect x="388" y="687" width="7" height="1" fill="#000000"/>
<rect x="388" y="692" width="7" height="1" fill="#000000"/>
<rect x="388" y="698" width="7" height="1" fill="#000000"/>
<rect x="388" y="704" width="7" height="1" fill="#000000"/>
<rect x="388" y="709" width="7" height="1" fill="#000000"/>
<rect x="388" y="714" width="7" height="1" fill="#000000"/>
<rect x="388" y="718" width="7" height="1" fill="#000000"/>
<rect x="388" y="723" width="7" height="1" fill="#000000"/>
<rect x="365" y="716" width="1" height="13" fill="#000000"/>
<rect x="367" y="716" width="1" height="8" fill="#000000"/>
<rect x="364" y="727" width="3" height="2" fill="#000000"/>
<rect x="387" y="727" width="3" height="2" fill="#000000"/>
<rect x="393" y="727" width="3" height="2" fill="#000000"/>
<path d="M349.5,704.5h5v3h-1.5l3,4.5v14.5q0,1.5 -1.5,1.5h-5.5q-1.5,0 -1.5,-1.5v-14.5l3,-4.5h-1.5z" fill="#00ffff" stroke="#000" stroke-width="1" shape-rendering="auto"/>
<rect x="350" y="707" width="4" height="1" fill="#000000"/>
<polygon points="459.5,555.5 470.5,555.5 475.5,560.5 475.5,566.5 481,573 481,574.5 475.5,574.5 475.5,579.5 468.5,579.5 468.5,574.5 462.5,574.5 462.5,579.5 454.5,579.5 454.5,560.5" fill="#00ffff" stroke="#000000" stroke-width="1.2" shape-rendering="auto"/>
<rect x="454.5" y="579.5" width="8" height="2" fill="#00ffff" stroke="#000000" stroke-width="1"/>
<rect x="468.5" y="579.5" width="7" height="2" fill="#00ffff" stroke="#000000" stroke-width="1"/>
<rect x="462.6" y="567.6" width="6.8" height="4.8" fill="#00ffff" stroke="#000000" stroke-width="1.2"/>
<rect x="460" y="582" width="1" height="23" fill="#00ffff"/>
<rect x="469" y="582" width="1" height="23" fill="#00ffff"/>
<rect x="458" y="604" width="3" height="1" fill="#00ffff"/>
<rect x="469" y="604" width="4" height="1" fill="#00ffff"/>
<path d="M455,582.5H460M455,582.5L458.5,588.5H460" stroke="#00ffff" fill="none" stroke-width="1.1" shape-rendering="auto"/>
<path d="M460.5,592L455,595.5L458.5,601.5H460" stroke="#00ffff" fill="none" stroke-width="1.1" shape-rendering="auto"/>
<path d="M469.5,582L473,583L475.5,586.5L470,589.5" stroke="#00ffff" fill="none" stroke-width="1.1" shape-rendering="auto"/>
<path d="M469.5,592.5L473,593.5L475.5,597.0L470,600.0" stroke="#00ffff" fill="none" stroke-width="1.1" shape-rendering="auto"/>
<rect x="459" y="597" width="1" height="1" fill="#b07070"/>
<rect x="470" y="591" width="1" height="1" fill="#b07070"/>
<rect x="470" y="603" width="1" height="1" fill="#b07070"/>
<rect x="460" y="680" width="1" height="23" fill="#00ffff"/>
<rect x="469" y="680" width="1" height="23" fill="#00ffff"/>
<rect x="458" y="680" width="3" height="1" fill="#00ffff"/>
<rect x="469" y="680" width="4" height="1" fill="#00ffff"/>
<path d="M460.5,684L455,687.5L458.5,693H460" stroke="#00ffff" fill="none" stroke-width="1.1" shape-rendering="auto"/>
<path d="M469.5,684L472.5,685L475.5,690L470,692.5" stroke="#00ffff" fill="none" stroke-width="1.1" shape-rendering="auto"/>
<path d="M460.5,696L455,699.5L458.5,702H460" stroke="#00ffff" fill="none" stroke-width="1.1" shape-rendering="auto"/>
<path d="M469.5,696L472.5,697L475.5,702L470,702.5" stroke="#00ffff" fill="none" stroke-width="1.1" shape-rendering="auto"/>
<rect x="459" y="689" width="1" height="1" fill="#b07070"/>
<rect x="459" y="701" width="1" height="1" fill="#b07070"/>
<rect x="470" y="695" width="1" height="1" fill="#b07070"/>
<polygon points="454.5,703.5 462.5,703.5 462.5,710.5 468.5,710.5 468.5,703.5 475.5,703.5 475.5,709.5 481,709.5 481,711 475.5,717.5 475.5,723.5 470.5,729 460.5,729 454.5,723.5" fill="#00ffff" stroke="#000000" stroke-width="1.2" shape-rendering="auto"/>
<rect x="455" y="705" width="8" height="1" fill="#000000"/>
<rect x="469" y="705" width="7" height="1" fill="#000000"/>
<rect x="462.6" y="713.6" width="6.8" height="3.8" fill="#00ffff" stroke="#000000" stroke-width="1.2"/>
<circle cx="465.5" cy="723.5" r="2.8" fill="#00ffff" stroke="#000" stroke-width="1.2" shape-rendering="auto"/>
<text class="b bt" x="418" y="571" textLength="23" lengthAdjust="spacingAndGlyphs">524</text>
<rect x="483" y="577" width="41" height="1" fill="#ffffff"/>
<rect x="523" y="577" width="1" height="61" fill="#ffffff"/>
<rect x="518" y="638" width="88" height="1" fill="#b4b4b4"/>
<rect x="518" y="638" width="1" height="19" fill="#b4b4b4"/>
<rect x="605" y="638" width="1" height="19" fill="#b4b4b4"/>
<rect x="523.5" y="641.5" width="78" height="13" fill="#808080" stroke="#000000" stroke-width="1"/>
<polygon points="527.5,652.5 530.5,643.5 537.5,643.5 540.5,652.5" fill="#c0c0c0" stroke="#000000" stroke-width="1" shape-rendering="auto"/>
<polygon points="547.5,652.5 550.5,643.5 557.5,643.5 560.5,652.5" fill="#c0c0c0" stroke="#000000" stroke-width="1" shape-rendering="auto"/>
<polygon points="564.5,652.5 567.5,643.5 574.5,643.5 577.5,652.5" fill="#c0c0c0" stroke="#000000" stroke-width="1" shape-rendering="auto"/>
<polygon points="584.5,652.5 587.5,643.5 594.5,643.5 597.5,652.5" fill="#c0c0c0" stroke="#000000" stroke-width="1" shape-rendering="auto"/>
<text class="b bt" x="532" y="630" textLength="22" lengthAdjust="spacingAndGlyphs">140</text>
<text class="b bt" x="574" y="630" textLength="22" lengthAdjust="spacingAndGlyphs">144</text>
<rect x="574" y="657" width="1" height="53" fill="#ffffff"/>
<text class="s" x="492" y="601.5" textLength="14" lengthAdjust="spacingAndGlyphs">137</text>
<rect x="493" y="608" width="1" height="18" fill="#ffffff"/>
<polygon points="480.5,626.5 504.5,626.5 504.5,644.5 484.5,664.5 480.5,664.5" fill="#48a8a8" stroke="#000000" stroke-width="1" shape-rendering="auto"/>
<rect x="481" y="627" width="23" height="17" fill="#48c0c8"/>
<rect x="489.5" y="634.5" width="6" height="5" fill="#00ffff" stroke="#000000" stroke-width="1"/>
<rect x="440" y="631" width="38" height="11" fill="#ece9d8"/>
<rect x="440" y="631" width="38" height="1" fill="#d9c6b8"/>
<rect x="440" y="631" width="1" height="11" fill="#d9c6b8"/>
<rect x="440" y="641" width="38" height="1" fill="#ffffff"/>
<rect x="477" y="631" width="1" height="11" fill="#ffffff"/>
<text class="l" x="460" y="641" textLength="32" lengthAdjust="spacingAndGlyphs" text-anchor="middle" style="fill:#000;color:#000">БФ-124</text>
<rect x="483" y="664" width="1" height="3" fill="#ffffff"/>
<rect x="480" y="667" width="8" height="2" fill="#00ffff"/>
<rect x="480" y="673" width="8" height="2" fill="#00ffff"/>
<rect x="476" y="670" width="19" height="2" fill="#ffff00"/>
<rect x="493" y="670" width="2" height="6" fill="#ffff00"/>
<rect x="483" y="676" width="1" height="34" fill="#ffffff"/>
<text class="b bt" x="505" y="676" textLength="23" lengthAdjust="spacingAndGlyphs">959</text>
<polygon points="587.5,555.5 598.5,555.5 603.5,560.5 603.5,566.5 609,573 609,574.5 603.5,574.5 603.5,579.5 596.5,579.5 596.5,574.5 590.5,574.5 590.5,579.5 582.5,579.5 582.5,560.5" fill="#00ffff" stroke="#000000" stroke-width="1.2" shape-rendering="auto"/>
<rect x="582.5" y="579.5" width="8" height="2" fill="#00ffff" stroke="#000000" stroke-width="1"/>
<rect x="596.5" y="579.5" width="7" height="2" fill="#00ffff" stroke="#000000" stroke-width="1"/>
<rect x="590.6" y="567.6" width="6.8" height="4.8" fill="#00ffff" stroke="#000000" stroke-width="1.2"/>
<rect x="588" y="582" width="1" height="23" fill="#00ffff"/>
<rect x="597" y="582" width="1" height="23" fill="#00ffff"/>
<rect x="586" y="604" width="3" height="1" fill="#00ffff"/>
<rect x="597" y="604" width="4" height="1" fill="#00ffff"/>
<path d="M583,582.5H588M583,582.5L586.5,588.5H588" stroke="#00ffff" fill="none" stroke-width="1.1" shape-rendering="auto"/>
<path d="M588.5,592L583,595.5L586.5,601.5H588" stroke="#00ffff" fill="none" stroke-width="1.1" shape-rendering="auto"/>
<path d="M597.5,582L601,583L603.5,586.5L598,589.5" stroke="#00ffff" fill="none" stroke-width="1.1" shape-rendering="auto"/>
<path d="M597.5,592.5L601,593.5L603.5,597.0L598,600.0" stroke="#00ffff" fill="none" stroke-width="1.1" shape-rendering="auto"/>
<rect x="587" y="597" width="1" height="1" fill="#b07070"/>
<rect x="598" y="591" width="1" height="1" fill="#b07070"/>
<rect x="598" y="603" width="1" height="1" fill="#b07070"/>
<rect x="588" y="680" width="1" height="23" fill="#00ffff"/>
<rect x="597" y="680" width="1" height="23" fill="#00ffff"/>
<rect x="586" y="680" width="3" height="1" fill="#00ffff"/>
<rect x="597" y="680" width="4" height="1" fill="#00ffff"/>
<path d="M588.5,684L583,687.5L586.5,693H588" stroke="#00ffff" fill="none" stroke-width="1.1" shape-rendering="auto"/>
<path d="M597.5,684L600.5,685L603.5,690L598,692.5" stroke="#00ffff" fill="none" stroke-width="1.1" shape-rendering="auto"/>
<path d="M588.5,696L583,699.5L586.5,702H588" stroke="#00ffff" fill="none" stroke-width="1.1" shape-rendering="auto"/>
<path d="M597.5,696L600.5,697L603.5,702L598,702.5" stroke="#00ffff" fill="none" stroke-width="1.1" shape-rendering="auto"/>
<rect x="587" y="689" width="1" height="1" fill="#b07070"/>
<rect x="587" y="701" width="1" height="1" fill="#b07070"/>
<rect x="598" y="695" width="1" height="1" fill="#b07070"/>
<g transform="translate(1186,0) scale(-1,1)">
<polygon points="582.5,703.5 590.5,703.5 590.5,710.5 596.5,710.5 596.5,703.5 603.5,703.5 603.5,709.5 609,709.5 609,711 603.5,717.5 603.5,723.5 598.5,729 588.5,729 582.5,723.5" fill="#00ffff" stroke="#000000" stroke-width="1.2" shape-rendering="auto"/>
<rect x="583" y="705" width="8" height="1" fill="#000000"/>
<rect x="597" y="705" width="7" height="1" fill="#000000"/>
<rect x="590.6" y="713.6" width="6.8" height="3.8" fill="#00ffff" stroke="#000000" stroke-width="1.2"/>
<circle cx="593.5" cy="723.5" r="2.8" fill="#00ffff" stroke="#000" stroke-width="1.2" shape-rendering="auto"/>
</g>
<text class="b bt" x="546" y="571" textLength="23" lengthAdjust="spacingAndGlyphs">525</text>
<rect x="609" y="576" width="1" height="34" fill="#ffffff"/>
<rect x="609" y="609" width="110" height="1" fill="#ffffff"/>
<rect x="656" y="609" width="1" height="8" fill="#ffffff"/>
<rect x="718" y="609" width="1" height="8" fill="#ffffff"/>
<polygon points="624.5,617.5 686.5,617.5 686.5,673.5 656.5,690.5 624.5,673.5" fill="#00ffff" stroke="#808080" stroke-width="1" shape-rendering="auto"/>
<rect x="624" y="673" width="63" height="1" fill="#808080"/>
<rect x="624" y="617" width="1" height="57" fill="#808080"/>
<rect x="686" y="617" width="1" height="57" fill="#808080"/>
<rect x="624" y="617" width="63" height="1" fill="#808080"/>
<rect x="652.5" y="625.5" width="6" height="5" fill="#00ffff" stroke="#000000" stroke-width="1"/>
<rect x="652.5" y="660.5" width="6" height="5" fill="#00ffff" stroke="#000000" stroke-width="1"/>
<rect x="639" y="638" width="37" height="11" fill="#ece9d8"/>
<rect x="639" y="638" width="37" height="1" fill="#d9c6b8"/>
<rect x="639" y="638" width="1" height="11" fill="#d9c6b8"/>
<rect x="639" y="648" width="37" height="1" fill="#ffffff"/>
<rect x="675" y="638" width="1" height="11" fill="#ffffff"/>
<text class="l" x="658.5" y="648" textLength="26" lengthAdjust="spacingAndGlyphs" text-anchor="middle" style="fill:#000;color:#000">БФ-14</text>
<polygon points="686.5,617.5 748.5,617.5 748.5,673.5 718.5,690.5 686.5,673.5" fill="#00ffff" stroke="#808080" stroke-width="1" shape-rendering="auto"/>
<rect x="686" y="673" width="63" height="1" fill="#808080"/>
<rect x="686" y="617" width="1" height="57" fill="#808080"/>
<rect x="748" y="617" width="1" height="57" fill="#808080"/>
<rect x="686" y="617" width="63" height="1" fill="#808080"/>
<rect x="714.5" y="625.5" width="6" height="5" fill="#00ffff" stroke="#000000" stroke-width="1"/>
<rect x="714.5" y="660.5" width="6" height="5" fill="#00ffff" stroke="#000000" stroke-width="1"/>
<rect x="701" y="638" width="37" height="11" fill="#ece9d8"/>
<rect x="701" y="638" width="37" height="1" fill="#d9c6b8"/>
<rect x="701" y="638" width="1" height="11" fill="#d9c6b8"/>
<rect x="701" y="648" width="37" height="1" fill="#ffffff"/>
<rect x="737" y="638" width="1" height="11" fill="#ffffff"/>
<text class="l" x="720.5" y="648" textLength="26" lengthAdjust="spacingAndGlyphs" text-anchor="middle" style="fill:#000;color:#000">БФ-15</text>
<text class="b bt" x="616" y="704" textLength="23" lengthAdjust="spacingAndGlyphs">960</text>
<text class="b bt" x="678" y="704" textLength="23" lengthAdjust="spacingAndGlyphs">961</text>
<rect x="656" y="690" width="1" height="7" fill="#ffffff"/>
<rect x="652" y="697" width="8" height="2" fill="#00ffff"/>
<rect x="652" y="703" width="8" height="2" fill="#00ffff"/>
<rect x="648" y="700" width="19" height="2" fill="#ffff00"/>
<rect x="665" y="700" width="2" height="6" fill="#ffff00"/>
<rect x="656" y="705" width="1" height="7" fill="#ffffff"/>
<rect x="718" y="690" width="1" height="7" fill="#ffffff"/>
<rect x="714" y="697" width="8" height="2" fill="#00ffff"/>
<rect x="714" y="703" width="8" height="2" fill="#00ffff"/>
<rect x="710" y="700" width="19" height="2" fill="#ffff00"/>
<rect x="727" y="700" width="2" height="6" fill="#ffff00"/>
<rect x="718" y="705" width="1" height="7" fill="#ffffff"/>
<text class="l2" x="688" y="725" textLength="44" lengthAdjust="spacingAndGlyphs">Гарниры</text>
<polygon points="655,563 736,563 741,567 741,571 736,576 733,569 650,569" fill="url(#hatch)"/>
<rect x="648.5" y="568.5" width="88" height="9" rx="4.5" ry="4.5" fill="#004848" stroke="#00ffff" stroke-width="1" shape-rendering="auto"/>
<rect x="653" y="570" width="79" height="4" fill="#003838"/>
<rect x="653" y="574" width="79" height="3" fill="#005a5a"/>
<polygon points="656,570 662,570 657,574" fill="#909090" stroke="none" stroke-width="0" />
<circle cx="653" cy="573" r="3.4" fill="#00ffff" stroke="#000" stroke-width="1.2" shape-rendering="auto"/>
<path d="M650,573L653,572.1L656,573L653,573.9zM653,570L653.9,573L653,576L652.1,573z" fill="#003c3c" shape-rendering="auto"/>
<circle cx="731.8" cy="573" r="2.8" fill="#00ffff" stroke="#000" stroke-width="2" shape-rendering="auto"/>
<text class="b bt" x="748" y="571" textLength="23" lengthAdjust="spacingAndGlyphs">137</text>
<rect x="731" y="554" width="1" height="9" fill="#ffffff"/>
<rect x="653" y="578" width="1" height="5" fill="#ffffff"/>
<rect x="650.5" y="583.5" width="6" height="4" fill="#00ffff" stroke="#000000" stroke-width="1"/>
<rect x="653" y="588" width="1" height="8" fill="#ffffff"/>
<text class="s" x="659" y="601" textLength="14" lengthAdjust="spacingAndGlyphs">124</text>
<polygon points="806,563 887,563 892,567 892,571 887,576 884,569 801,569" fill="url(#hatch)"/>
<rect x="799.5" y="568.5" width="88" height="9" rx="4.5" ry="4.5" fill="#004848" stroke="#00ffff" stroke-width="1" shape-rendering="auto"/>
<rect x="804" y="570" width="79" height="4" fill="#003838"/>
<rect x="804" y="574" width="79" height="3" fill="#005a5a"/>
<polygon points="807,570 813,570 808,574" fill="#909090" stroke="none" stroke-width="0" />
<circle cx="804" cy="573" r="3.4" fill="#00ffff" stroke="#000" stroke-width="1.2" shape-rendering="auto"/>
<path d="M801,573L804,572.1L807,573L804,573.9zM804,570L804.9,573L804,576L803.1,573z" fill="#003c3c" shape-rendering="auto"/>
<circle cx="882.8" cy="573" r="2.8" fill="#00ffff" stroke="#000" stroke-width="2" shape-rendering="auto"/>
<text class="b bt" x="899" y="571" textLength="23" lengthAdjust="spacingAndGlyphs">138</text>
<rect x="887" y="554" width="1" height="5" fill="#ffffff"/>
<rect x="804" y="578" width="1" height="5" fill="#ffffff"/>
<rect x="801.5" y="583.5" width="6" height="4" fill="#00ffff" stroke="#000000" stroke-width="1"/>
<rect x="804" y="588" width="1" height="8" fill="#ffffff"/>
<rect x="774" y="595" width="31" height="1" fill="#ffffff"/>
<rect x="774" y="595" width="1" height="37" fill="#ffffff"/>
<rect x="758" y="632" width="33" height="11" fill="#ece9d8"/>
<rect x="758" y="632" width="33" height="1" fill="#d9c6b8"/>
<rect x="758" y="632" width="1" height="11" fill="#d9c6b8"/>
<rect x="758" y="642" width="33" height="1" fill="#ffffff"/>
<rect x="790" y="632" width="1" height="11" fill="#ffffff"/>
<text class="l" x="775.5" y="642" textLength="32" lengthAdjust="spacingAndGlyphs" text-anchor="middle" style="fill:#000;color:#000">БФ-126</text>
<polygon points="785.5,643.5 761.5,643.5 761.5,661.5 781.5,681.5 785.5,681.5" fill="#48a8a8" stroke="#000000" stroke-width="1" shape-rendering="auto"/>
<rect x="762" y="644" width="23" height="17" fill="#48c0c8"/>
<rect x="770.5" y="651.5" width="6" height="5" fill="#00ffff" stroke="#000000" stroke-width="1"/>
<rect x="783" y="682" width="1" height="3" fill="#ffffff"/>
<rect x="779" y="685" width="8" height="2" fill="#00ffff"/>
<rect x="779" y="691" width="8" height="2" fill="#00ffff"/>
<rect x="775" y="688" width="19" height="2" fill="#ffff00"/>
<rect x="792" y="688" width="2" height="6" fill="#ffff00"/>
<rect x="783" y="694" width="1" height="17" fill="#ffffff"/>
<rect x="783" y="710" width="14" height="1" fill="#ffffff"/>
<text class="b bt" x="755" y="709" textLength="23" lengthAdjust="spacingAndGlyphs">962</text>
<polygon points="809.5,600.5 820.5,600.5 825.5,605.5 825.5,611.5 831,618 831,619.5 825.5,619.5 825.5,624.5 818.5,624.5 818.5,619.5 812.5,619.5 812.5,624.5 804.5,624.5 804.5,605.5" fill="#00ffff" stroke="#000000" stroke-width="1.2" shape-rendering="auto"/>
<rect x="804.5" y="624.5" width="8" height="2" fill="#00ffff" stroke="#000000" stroke-width="1"/>
<rect x="818.5" y="624.5" width="7" height="2" fill="#00ffff" stroke="#000000" stroke-width="1"/>
<rect x="812.6" y="612.6" width="6.8" height="4.8" fill="#00ffff" stroke="#000000" stroke-width="1.2"/>
<rect x="810" y="628" width="1" height="23" fill="#00ffff"/>
<rect x="819" y="628" width="1" height="23" fill="#00ffff"/>
<rect x="808" y="650" width="3" height="1" fill="#00ffff"/>
<rect x="819" y="650" width="4" height="1" fill="#00ffff"/>
<path d="M805,628.5H810M805,628.5L808.5,634.5H810" stroke="#00ffff" fill="none" stroke-width="1.1" shape-rendering="auto"/>
<path d="M810.5,638L805,641.5L808.5,647.5H810" stroke="#00ffff" fill="none" stroke-width="1.1" shape-rendering="auto"/>
<path d="M819.5,628L823,629L825.5,632.5L820,635.5" stroke="#00ffff" fill="none" stroke-width="1.1" shape-rendering="auto"/>
<path d="M819.5,638.5L823,639.5L825.5,643.0L820,646.0" stroke="#00ffff" fill="none" stroke-width="1.1" shape-rendering="auto"/>
<rect x="809" y="643" width="1" height="1" fill="#b07070"/>
<rect x="820" y="637" width="1" height="1" fill="#b07070"/>
<rect x="820" y="649" width="1" height="1" fill="#b07070"/>
<rect x="810" y="680" width="1" height="23" fill="#00ffff"/>
<rect x="819" y="680" width="1" height="23" fill="#00ffff"/>
<rect x="808" y="680" width="3" height="1" fill="#00ffff"/>
<rect x="819" y="680" width="4" height="1" fill="#00ffff"/>
<path d="M810.5,684L805,687.5L808.5,693H810" stroke="#00ffff" fill="none" stroke-width="1.1" shape-rendering="auto"/>
<path d="M819.5,684L822.5,685L825.5,690L820,692.5" stroke="#00ffff" fill="none" stroke-width="1.1" shape-rendering="auto"/>
<path d="M810.5,696L805,699.5L808.5,702H810" stroke="#00ffff" fill="none" stroke-width="1.1" shape-rendering="auto"/>
<path d="M819.5,696L822.5,697L825.5,702L820,702.5" stroke="#00ffff" fill="none" stroke-width="1.1" shape-rendering="auto"/>
<rect x="809" y="689" width="1" height="1" fill="#b07070"/>
<rect x="809" y="701" width="1" height="1" fill="#b07070"/>
<rect x="820" y="695" width="1" height="1" fill="#b07070"/>
<g transform="translate(1630,0) scale(-1,1)">
<polygon points="804.5,703.5 812.5,703.5 812.5,710.5 818.5,710.5 818.5,703.5 825.5,703.5 825.5,709.5 831,709.5 831,711 825.5,717.5 825.5,723.5 820.5,729 810.5,729 804.5,723.5" fill="#00ffff" stroke="#000000" stroke-width="1.2" shape-rendering="auto"/>
<rect x="805" y="705" width="8" height="1" fill="#000000"/>
<rect x="819" y="705" width="7" height="1" fill="#000000"/>
<rect x="812.6" y="713.6" width="6.8" height="3.8" fill="#00ffff" stroke="#000000" stroke-width="1.2"/>
<circle cx="815.5" cy="723.5" r="2.8" fill="#00ffff" stroke="#000" stroke-width="1.2" shape-rendering="auto"/>
</g>
<text class="b bt" x="839" y="615" textLength="23" lengthAdjust="spacingAndGlyphs">526</text>
<rect x="831" y="621" width="1" height="40" fill="#ffffff"/>
<polygon points="835,660 885,660 890,664 890,668 885,673 882,666 830,666" fill="url(#hatch)"/>
<rect x="828.5" y="665.5" width="57" height="9" rx="4.5" ry="4.5" fill="#004848" stroke="#00ffff" stroke-width="1" shape-rendering="auto"/>
<rect x="833" y="667" width="48" height="4" fill="#003838"/>
<rect x="833" y="671" width="48" height="3" fill="#005a5a"/>
<polygon points="836,667 842,667 837,671" fill="#909090" stroke="none" stroke-width="0" />
<circle cx="881" cy="670" r="3.4" fill="#00ffff" stroke="#000" stroke-width="1.2" shape-rendering="auto"/>
<path d="M878,670L881,669.1L884,670L881,670.9zM881,667L881.9,670L881,673L880.1,670z" fill="#003c3c" shape-rendering="auto"/>
<circle cx="833.2" cy="670" r="2.8" fill="#00ffff" stroke="#000" stroke-width="2" shape-rendering="auto"/>
<text class="b bt" x="846" y="694" textLength="23" lengthAdjust="spacingAndGlyphs">139</text>
<rect x="881" y="675" width="1" height="18" fill="#ffffff"/>
<rect x="881" y="692" width="16" height="1" fill="#ffffff"/>
<rect x="896" y="607" width="1" height="86" fill="#ffffff"/>
<rect x="896" y="607" width="48" height="1" fill="#ffffff"/>
<rect x="943" y="607" width="1" height="10" fill="#ffffff"/>
<polygon points="911.5,617.5 973.5,617.5 973.5,673.5 943.5,690.5 911.5,673.5" fill="#00ffff" stroke="#808080" stroke-width="1" shape-rendering="auto"/>
<rect x="911" y="673" width="63" height="1" fill="#808080"/>
<rect x="911" y="617" width="1" height="57" fill="#808080"/>
<rect x="973" y="617" width="1" height="57" fill="#808080"/>
<rect x="911" y="617" width="63" height="1" fill="#808080"/>
<rect x="939.5" y="625.5" width="6" height="5" fill="#00ffff" stroke="#000000" stroke-width="1"/>
<rect x="939.5" y="660.5" width="6" height="5" fill="#00ffff" stroke="#000000" stroke-width="1"/>
<rect x="926" y="638" width="37" height="11" fill="#ece9d8"/>
<rect x="926" y="638" width="37" height="1" fill="#d9c6b8"/>
<rect x="926" y="638" width="1" height="11" fill="#d9c6b8"/>
<rect x="926" y="648" width="37" height="1" fill="#ffffff"/>
<rect x="962" y="638" width="1" height="11" fill="#ffffff"/>
<text class="l" x="945.5" y="648" textLength="26" lengthAdjust="spacingAndGlyphs" text-anchor="middle" style="fill:#000;color:#000">БФ-16</text>
<text class="b bt" x="903" y="704" textLength="23" lengthAdjust="spacingAndGlyphs">963</text>
<rect x="943" y="690" width="1" height="7" fill="#ffffff"/>
<rect x="939" y="697" width="8" height="2" fill="#00ffff"/>
<rect x="939" y="703" width="8" height="2" fill="#00ffff"/>
<rect x="935" y="700" width="19" height="2" fill="#ffff00"/>
<rect x="952" y="700" width="2" height="6" fill="#ffff00"/>
<rect x="943" y="705" width="1" height="8" fill="#ffffff"/>
<text class="l2" x="921" y="725" textLength="40" lengthAdjust="spacingAndGlyphs">Ризотто</text>
<g shape-rendering="auto" transform="translate(994,68)">
<polygon points="7.5,.5 17,.5 20.4,5 20.4,15 23.6,19.5 23.6,21.5 17.5,21.5 14.5,25.5 11.5,21.5 .5,21.5 .5,19.5 4,15 4,5" fill="#00ffff"/>
<path d="M.5,21V19.5L4,15V5L7.5,.5H17" fill="none" stroke="#000" stroke-width="1.1"/>
<path d="M17,.5L20.4,5V15L23.6,19.5V21.5H17.5L14.5,25.5M11.5,21.5H.5" fill="none" stroke="#fff" stroke-width="1.1"/>
<path d="M11.5,21.5L14.5,25.5" fill="none" stroke="#000" stroke-width="1.1"/>
</g>
<!-- status bar -->
<rect x="0" y="736" width="1024" height="32" fill="#ece9d8"/>
<rect x="0" y="736" width="1024" height="1" fill="#ffffff"/>
<rect x="0" y="766" width="1024" height="1" fill="#ffffff"/>
<rect x="0" y="767" width="1024" height="1" fill="#b9b5a9"/>
<rect x="1" y="737" width="169" height="1" fill="#aca899"/><rect x="1" y="737" width="1" height="29" fill="#aca899"/>
<rect x="170" y="737" width="1" height="30" fill="#ffffff"/>
<rect x="171" y="737" width="851" height="1" fill="#aca899"/><rect x="171" y="737" width="1" height="29" fill="#aca899"/>
<rect x="1022" y="737" width="1" height="30" fill="#ffffff"/>
</svg>
</body></html>
